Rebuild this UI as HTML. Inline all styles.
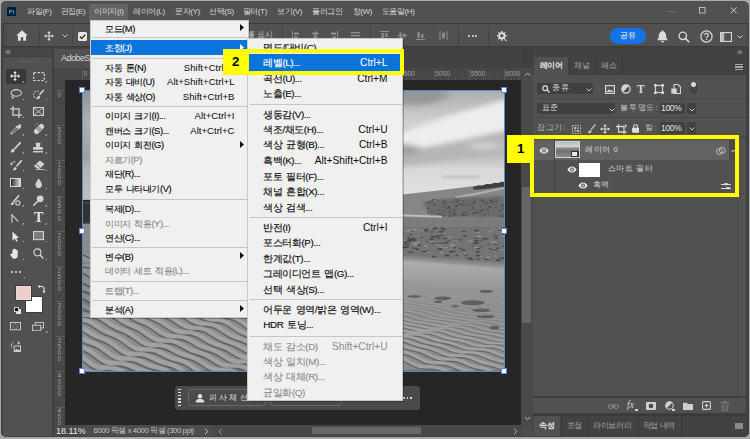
<!DOCTYPE html>
<html lang="ko"><head><meta charset="utf-8"><title>Photoshop</title><style>
html,body{margin:0;padding:0}
body{width:750px;height:439px;overflow:hidden;background:#a9a9a9;font-family:"Liberation Sans",sans-serif;position:relative;-webkit-font-smoothing:antialiased}
div,span,svg{position:absolute;box-sizing:border-box}
#win{left:1px;top:1px;width:748px;height:436px;background:#4a4a4a;border-radius:5px 6px 5px 5px;overflow:hidden}
.t{white-space:nowrap;line-height:12px;height:12px;font-size:9.500px}
.mb{color:#d6d6d6;font-size:8.100px}
.mi{color:#0c0c0c;-webkit-text-stroke:0.150px;font-size:9.400px;letter-spacing:-0.450px;word-spacing:1.500px}
.mi.d{color:#8a8a8a}
.sc{color:#0c0c0c;font-size:9.6px;text-align:right}
.sc.d{color:#8a8a8a}
.si{color:#0c0c0c;-webkit-text-stroke:0.150px;font-size:9.900px;letter-spacing:-0.450px;word-spacing:1.500px}
.si.d{color:#8d8d8d}
.ss{color:#0c0c0c;font-size:10.200px;text-align:right}
.ss.d{color:#8d8d8d}
.sep{height:1px;background:#c4c4c4}
.pt{color:#c8c8c8;font-size:7.700px;letter-spacing:0.700px}
.tb{font-size:7.700px;letter-spacing:-0.400px}
.rl{color:#a0a0a0;font-size:6.6px;line-height:8px;height:8px}
.rv{color:#a0a0a0;font-size:6.4px;line-height:6.1px;width:8px;text-align:center}
</style></head><body>
<div id="win">
<div style="left:0.0px;top:0.0px;width:748.0px;height:21.6px;background:#515151;"></div>
<div style="left:88.3px;top:3.0px;width:39.0px;height:15.5px;background:#646464;"></div>
<svg style="left:6px;top:5.900px" width="9.200" height="9.200" viewBox="0 0 24 24"><rect width="24" height="24" rx="4" fill="#001e36"/><path d="M5.5 17V7h3.7c2.2 0 3.6 1 3.6 3s-1.5 3.200-3.800 3.200H7.600V17zM7.600 8.800v2.600h1.300c1.100 0 1.700-.5 1.700-1.300s-.6-1.300-1.700-1.300zM16.500 17.200c-1 0-1.900-.2-2.600-.6v-1.900c.8.500 1.700.8 2.500.8.700 0 1-.2 1-.6 0-.4-.3-.6-1.300-1-1.500-.6-2.200-1.300-2.200-2.500 0-1.400 1.100-2.300 2.900-2.300.9 0 1.700.2 2.300.5v1.800c-.7-.4-1.500-.6-2.200-.6-.6 0-.9.200-.9.500 0 .4.300.6 1.300 1 1.600.6 2.200 1.300 2.200 2.500 0 1.500-1.100 2.400-3 2.400z" fill="#31a8ff"/></svg>
<span class="t mb" style="left:26.3px;top:5.3px;letter-spacing:-0.42px">파일(F)</span>
<span class="t mb" style="left:59.7px;top:5.3px;letter-spacing:-0.42px">편집(E)</span>
<span class="t mb" style="left:93.3px;top:5.3px;letter-spacing:-0.42px">이미지(I)</span>
<span class="t mb" style="left:132.3px;top:5.3px;letter-spacing:-0.42px">레이어(L)</span>
<span class="t mb" style="left:174.0px;top:5.3px;letter-spacing:-0.42px">문자(Y)</span>
<span class="t mb" style="left:208.0px;top:5.3px;letter-spacing:-0.42px">선택(S)</span>
<span class="t mb" style="left:241.7px;top:5.3px;letter-spacing:-0.42px">필터(T)</span>
<span class="t mb" style="left:276.3px;top:5.3px;letter-spacing:-0.42px">보기(V)</span>
<span class="t mb" style="left:311.3px;top:5.3px;letter-spacing:-0.42px">플러그인</span>
<span class="t mb" style="left:351.7px;top:5.3px;letter-spacing:-0.42px">창(W)</span>
<span class="t mb" style="left:380.7px;top:5.3px;letter-spacing:-0.42px">도움말(H)</span>
<svg style="left:660px;top:2px" width="88" height="16" viewBox="0 0 88 16"><path d="M6 8.500h8" stroke="#6a6a6a" stroke-width="1" fill="none"/><rect x="38.500" y="4.500" width="5.500" height="5.500" stroke="#c4c4c4" stroke-width="0.900" fill="none"/><path d="M69.700 4.300l6 6M75.700 4.300l-6 6" stroke="#d0d0d0" stroke-width="1" fill="none"/></svg>
<div style="left:1.6px;top:21.6px;width:744.4px;height:1.1px;background:#3a3a3a;"></div>
<div style="left:2.6px;top:22.7px;width:742.9px;height:22.5px;background:#515151;"></div>
<div style="left:1.6px;top:22.7px;width:1.0px;height:23.7px;background:#3a3a3a;"></div>
<div style="left:1.6px;top:45.2px;width:744.4px;height:1.2px;background:#3a3a3a;"></div>
<div style="left:5.0px;top:26.0px;width:1.0px;height:18.0px;background:#444;"></div>
<svg style="left:15px;top:29px" width="12" height="11" viewBox="0 0 12 11"><path d="M6 0.300L0.300 5.400h1.600v5.300h2.900V7.300h2.400v3.400h2.900V5.400h1.600z" fill="#e4e4e4"/></svg>
<div style="left:38.0px;top:26.0px;width:1.0px;height:18.0px;background:#434343;"></div>
<svg style="left:43.200px;top:30px" width="10" height="10" viewBox="0 0 12 12"><path d="M6 0l2.200 2.600H6.600v2.800h2.800V3.800L12 6l-2.600 2.200V6.600H6.600v2.800h1.600L6 12 3.800 9.400h1.600V6.600H2.600v1.600L0 6l2.600-2.200v1.600h2.800V2.600H3.800z" fill="#dcdcdc"/></svg>
<svg style="left:61px;top:33px" width="6" height="4" viewBox="0 0 6 4"><path d="M0.500 0.500L3 3l2.500-2.500" stroke="#c8c8c8" stroke-width="1" fill="none"/></svg>
<div style="left:71.0px;top:26.0px;width:1.0px;height:18.0px;background:#434343;"></div>
<svg style="left:76.500px;top:30.500px" width="9" height="9" viewBox="0 0 9 9"><rect width="9" height="9" rx="1.500" fill="#e6e6e6"/><path d="M2 4.600l1.800 1.800L7.200 2.600" stroke="#2a2a2a" stroke-width="1.400" fill="none"/></svg>
<span class="t pt" style="left:246.0px;top:27.5px;color:#bdbdbd;letter-spacing:0px">롤 표시</span>
<div style="left:281.0px;top:26.0px;width:1.0px;height:18.0px;background:#434343;"></div>
<svg style="left:290.5px;top:30px" width="9" height="9" viewBox="0 0 9 9"><path d="M0.500 0v9" stroke="#8e8e8e"/><rect x="2" y="1.500" width="5" height="2.200" fill="#8e8e8e"/><rect x="2" y="5.300" width="3.500" height="2.200" fill="#8e8e8e"/></svg>
<svg style="left:309.5px;top:30px" width="9" height="9" viewBox="0 0 9 9"><path d="M4.500 0v9" stroke="#8e8e8e"/><rect x="1.500" y="1.500" width="6" height="2.200" fill="#8e8e8e"/><rect x="2.500" y="5.300" width="4" height="2.200" fill="#8e8e8e"/></svg>
<svg style="left:327.5px;top:30px" width="9" height="9" viewBox="0 0 9 9"><path d="M8.500 0v9" stroke="#8e8e8e"/><rect x="2" y="1.500" width="5" height="2.200" fill="#8e8e8e"/><rect x="3.500" y="5.300" width="3.500" height="2.200" fill="#8e8e8e"/></svg>
<svg style="left:349.5px;top:30px" width="9" height="9" viewBox="0 0 9 9"><rect x="0" y="1" width="9" height="1.400" fill="#8e8e8e"/><rect x="0" y="4" width="9" height="1.400" fill="#8e8e8e"/><rect x="2" y="7" width="5" height="1.400" fill="#8e8e8e"/></svg>
<div style="left:369.0px;top:26.0px;width:1.0px;height:18.0px;background:#434343;"></div>
<svg style="left:378.5px;top:30px" width="9" height="9" viewBox="0 0 9 9"><path d="M0 0.500h9" stroke="#8e8e8e"/><rect x="1.500" y="2" width="2.200" height="6" fill="#8e8e8e"/><rect x="5.300" y="2" width="2.200" height="4" fill="#8e8e8e"/></svg>
<svg style="left:397.0px;top:30px" width="9" height="9" viewBox="0 0 9 9"><path d="M0 4.500h9" stroke="#8e8e8e"/><rect x="1.500" y="1.500" width="2.200" height="6" fill="#8e8e8e"/><rect x="5.300" y="2.500" width="2.200" height="4" fill="#8e8e8e"/></svg>
<svg style="left:414.5px;top:30px" width="9" height="9" viewBox="0 0 9 9"><path d="M0 8.500h9" stroke="#8e8e8e"/><rect x="1.500" y="1" width="2.200" height="6" fill="#8e8e8e"/><rect x="5.300" y="3" width="2.200" height="4" fill="#8e8e8e"/></svg>
<svg style="left:438.0px;top:30px" width="9" height="9" viewBox="0 0 9 9"><path d="M1 0v9M8 0v9" stroke="#8e8e8e"/><rect x="3.200" y="1.500" width="2.600" height="6" fill="#8e8e8e"/></svg>
<div style="left:457.0px;top:26.0px;width:1.0px;height:18.0px;background:#434343;"></div>
<div style="left:467.0px;top:33.5px;width:2.0px;height:2.0px;background:#e0e0e0;border-radius:1px"></div>
<div style="left:470.5px;top:33.5px;width:2.0px;height:2.0px;background:#e0e0e0;border-radius:1px"></div>
<div style="left:474.0px;top:33.5px;width:2.0px;height:2.0px;background:#e0e0e0;border-radius:1px"></div>
<div style="left:486.5px;top:26.0px;width:1.0px;height:18.0px;background:#434343;"></div>
<svg style="left:496px;top:29.800px" width="10.500" height="10.500" viewBox="0 0 12 12"><circle cx="5.500" cy="5.500" r="3" fill="none" stroke="#e0e0e0" stroke-width="2"/><g stroke="#e0e0e0" stroke-width="1.600"><path d="M5.500 0v2M5.500 9v2M0 5.500h2M9 5.500h2M1.600 1.600l1.400 1.400M8 8l1.400 1.400M1.600 9.400L3 8M8 3l1.400-1.400"/></g><path d="M8.500 10h3l-1.500 1.800z" fill="#e0e0e0"/></svg>
<div style="left:609.0px;top:27.0px;width:36.0px;height:16.0px;background:#1473e6;border-radius:8px"></div>
<span class="t t" style="left:609.0px;width:36.0px;top:29.0px;color:#fff;font-size:8px;text-align:center;letter-spacing:-0.3px">공유</span>
<svg style="left:655.500px;top:28.500px" width="11" height="13" viewBox="0 0 11 13"><path d="M5.500 0.500c0.600 0 1 .4 1 1 1.700.5 2.600 2 2.600 3.800 0 2.700.6 3.500 1.600 4.200v.7H0.300v-.7c1-.7 1.600-1.500 1.600-4.200 0-1.800.9-3.300 2.600-3.800 0-.6.400-1 1-1zM4 11h3c0 .9-.7 1.500-1.500 1.500S4 11.900 4 11z" fill="#dcdcdc"/></svg>
<svg style="left:677px;top:29.500px" width="12" height="12" viewBox="0 0 12 12"><circle cx="4.800" cy="4.800" r="3.700" fill="none" stroke="#dcdcdc" stroke-width="1.300"/><path d="M7.600 7.600l3.600 3.600" stroke="#dcdcdc" stroke-width="1.500"/></svg>
<svg style="left:698.500px;top:29px" width="13" height="13" viewBox="0 0 13 13"><circle cx="6.500" cy="6.500" r="5.600" fill="none" stroke="#dcdcdc" stroke-width="1.200"/><path d="M4.700 5.200c0-1.100.8-1.800 1.900-1.800s1.800.7 1.800 1.600c0 1.500-1.800 1.500-1.800 2.900" fill="none" stroke="#dcdcdc" stroke-width="1.100"/><rect x="6" y="8.800" width="1.200" height="1.200" fill="#dcdcdc"/></svg>
<svg style="left:718.500px;top:30.500px" width="12" height="10" viewBox="0 0 12 10"><rect x="0.600" y="0.600" width="10.800" height="8.800" fill="none" stroke="#d8d8d8" stroke-width="1.100"/><rect x="1" y="1" width="3.200" height="8" fill="#bdbdbd"/></svg>
<svg style="left:736px;top:33.500px" width="6" height="4" viewBox="0 0 6 4"><path d="M0.500 0.500L3 3l2.500-2.500" stroke="#c8c8c8" stroke-width="1" fill="none"/></svg>
<div style="left:0.0px;top:46.4px;width:748.0px;height:389.6px;background:#404040;"></div>
<div style="left:2.0px;top:47.3px;width:49.0px;height:8.2px;background:#464646;"></div>
<span class="t t" style="left:4.5px;top:44.8px;color:#c0c0c0;font-size:9.500px">&#171;</span>
<div style="left:2.0px;top:55.5px;width:49.0px;height:379.5px;background:#515151;"></div>
<div style="left:19.0px;top:59.5px;width:1.5px;height:1.0px;background:#686868;"></div>
<div style="left:22.0px;top:59.5px;width:1.5px;height:1.0px;background:#686868;"></div>
<div style="left:25.0px;top:59.5px;width:1.5px;height:1.0px;background:#686868;"></div>
<div style="left:28.0px;top:59.5px;width:1.5px;height:1.0px;background:#686868;"></div>
<div style="left:31.0px;top:59.5px;width:1.5px;height:1.0px;background:#686868;"></div>
<div style="left:53.0px;top:47.3px;width:467.0px;height:19.7px;background:#424242;"></div>
<div style="left:53.0px;top:48.0px;width:96.0px;height:19.0px;background:#515151;"></div>
<span class="t t" style="left:60.0px;top:50.7px;color:#d8d8d8;font-size:9px;letter-spacing:-0.500px">AdobeS</span>
<div style="left:53.0px;top:67.3px;width:478.5px;height:11.7px;background:#474747;"></div>
<div style="left:53.0px;top:67.3px;width:11.0px;height:356.7px;background:#474747;"></div>
<div style="left:64.0px;top:79.0px;width:456.0px;height:345.0px;background:#262626;"></div>
<div style="left:520.0px;top:67.3px;width:11.5px;height:356.7px;background:#494949;"></div>
<div style="left:520.8px;top:186.0px;width:9.7px;height:136.0px;background:#646464;border-radius:1px"></div>
<svg style="left:523px;top:70.800px" width="7" height="5" viewBox="0 0 7 5"><path d="M0.800 3.800L3.500 1l2.700 2.800" stroke="#bbb" stroke-width="1" fill="none"/></svg>
<svg style="left:523px;top:414.800px" width="7" height="5" viewBox="0 0 7 5"><path d="M0.800 1L3.500 3.800 6.200 1" stroke="#bbb" stroke-width="1" fill="none"/></svg>
<div style="left:81.0px;top:68.0px;width:0.8px;height:11.0px;background:#5e5e5e;"></div>
<span class="t rl" style="left:82.6px;top:69.3px;">0</span>
<div style="left:88.0px;top:77.0px;width:0.7px;height:2.0px;background:#5a5a5a;"></div>
<div style="left:95.1px;top:77.0px;width:0.7px;height:2.0px;background:#5a5a5a;"></div>
<div style="left:102.1px;top:77.0px;width:0.7px;height:2.0px;background:#5a5a5a;"></div>
<div style="left:109.1px;top:77.0px;width:0.7px;height:2.0px;background:#5a5a5a;"></div>
<div style="left:116.2px;top:68.0px;width:0.8px;height:11.0px;background:#5e5e5e;"></div>
<span class="t rl" style="left:117.8px;top:69.3px;">500</span>
<div style="left:123.2px;top:77.0px;width:0.7px;height:2.0px;background:#5a5a5a;"></div>
<div style="left:130.2px;top:77.0px;width:0.7px;height:2.0px;background:#5a5a5a;"></div>
<div style="left:137.3px;top:77.0px;width:0.7px;height:2.0px;background:#5a5a5a;"></div>
<div style="left:144.3px;top:77.0px;width:0.7px;height:2.0px;background:#5a5a5a;"></div>
<div style="left:151.3px;top:68.0px;width:0.8px;height:11.0px;background:#5e5e5e;"></div>
<span class="t rl" style="left:152.9px;top:69.3px;">1000</span>
<div style="left:158.4px;top:77.0px;width:0.7px;height:2.0px;background:#5a5a5a;"></div>
<div style="left:165.4px;top:77.0px;width:0.7px;height:2.0px;background:#5a5a5a;"></div>
<div style="left:172.4px;top:77.0px;width:0.7px;height:2.0px;background:#5a5a5a;"></div>
<div style="left:179.5px;top:77.0px;width:0.7px;height:2.0px;background:#5a5a5a;"></div>
<div style="left:186.5px;top:68.0px;width:0.8px;height:11.0px;background:#5e5e5e;"></div>
<span class="t rl" style="left:188.1px;top:69.3px;">1500</span>
<div style="left:193.5px;top:77.0px;width:0.7px;height:2.0px;background:#5a5a5a;"></div>
<div style="left:200.6px;top:77.0px;width:0.7px;height:2.0px;background:#5a5a5a;"></div>
<div style="left:207.6px;top:77.0px;width:0.7px;height:2.0px;background:#5a5a5a;"></div>
<div style="left:214.6px;top:77.0px;width:0.7px;height:2.0px;background:#5a5a5a;"></div>
<div style="left:221.7px;top:68.0px;width:0.8px;height:11.0px;background:#5e5e5e;"></div>
<span class="t rl" style="left:223.3px;top:69.3px;">2000</span>
<div style="left:228.7px;top:77.0px;width:0.7px;height:2.0px;background:#5a5a5a;"></div>
<div style="left:235.7px;top:77.0px;width:0.7px;height:2.0px;background:#5a5a5a;"></div>
<div style="left:242.8px;top:77.0px;width:0.7px;height:2.0px;background:#5a5a5a;"></div>
<div style="left:249.8px;top:77.0px;width:0.7px;height:2.0px;background:#5a5a5a;"></div>
<div style="left:256.9px;top:68.0px;width:0.8px;height:11.0px;background:#5e5e5e;"></div>
<span class="t rl" style="left:258.5px;top:69.3px;">2500</span>
<div style="left:263.9px;top:77.0px;width:0.7px;height:2.0px;background:#5a5a5a;"></div>
<div style="left:270.9px;top:77.0px;width:0.7px;height:2.0px;background:#5a5a5a;"></div>
<div style="left:277.9px;top:77.0px;width:0.7px;height:2.0px;background:#5a5a5a;"></div>
<div style="left:285.0px;top:77.0px;width:0.7px;height:2.0px;background:#5a5a5a;"></div>
<div style="left:292.0px;top:68.0px;width:0.8px;height:11.0px;background:#5e5e5e;"></div>
<span class="t rl" style="left:293.6px;top:69.3px;">3000</span>
<div style="left:299.0px;top:77.0px;width:0.7px;height:2.0px;background:#5a5a5a;"></div>
<div style="left:306.1px;top:77.0px;width:0.7px;height:2.0px;background:#5a5a5a;"></div>
<div style="left:313.1px;top:77.0px;width:0.7px;height:2.0px;background:#5a5a5a;"></div>
<div style="left:320.1px;top:77.0px;width:0.7px;height:2.0px;background:#5a5a5a;"></div>
<div style="left:327.2px;top:68.0px;width:0.8px;height:11.0px;background:#5e5e5e;"></div>
<span class="t rl" style="left:328.8px;top:69.3px;">3500</span>
<div style="left:334.2px;top:77.0px;width:0.7px;height:2.0px;background:#5a5a5a;"></div>
<div style="left:341.2px;top:77.0px;width:0.7px;height:2.0px;background:#5a5a5a;"></div>
<div style="left:348.3px;top:77.0px;width:0.7px;height:2.0px;background:#5a5a5a;"></div>
<div style="left:355.3px;top:77.0px;width:0.7px;height:2.0px;background:#5a5a5a;"></div>
<div style="left:362.4px;top:68.0px;width:0.8px;height:11.0px;background:#5e5e5e;"></div>
<span class="t rl" style="left:364.0px;top:69.3px;">4000</span>
<div style="left:369.4px;top:77.0px;width:0.7px;height:2.0px;background:#5a5a5a;"></div>
<div style="left:376.4px;top:77.0px;width:0.7px;height:2.0px;background:#5a5a5a;"></div>
<div style="left:383.4px;top:77.0px;width:0.7px;height:2.0px;background:#5a5a5a;"></div>
<div style="left:390.5px;top:77.0px;width:0.7px;height:2.0px;background:#5a5a5a;"></div>
<div style="left:397.5px;top:68.0px;width:0.8px;height:11.0px;background:#5e5e5e;"></div>
<span class="t rl" style="left:399.1px;top:69.3px;">4500</span>
<div style="left:404.6px;top:77.0px;width:0.7px;height:2.0px;background:#5a5a5a;"></div>
<div style="left:411.6px;top:77.0px;width:0.7px;height:2.0px;background:#5a5a5a;"></div>
<div style="left:418.6px;top:77.0px;width:0.7px;height:2.0px;background:#5a5a5a;"></div>
<div style="left:425.7px;top:77.0px;width:0.7px;height:2.0px;background:#5a5a5a;"></div>
<div style="left:432.7px;top:68.0px;width:0.8px;height:11.0px;background:#5e5e5e;"></div>
<span class="t rl" style="left:434.3px;top:69.3px;">5000</span>
<div style="left:439.7px;top:77.0px;width:0.7px;height:2.0px;background:#5a5a5a;"></div>
<div style="left:446.8px;top:77.0px;width:0.7px;height:2.0px;background:#5a5a5a;"></div>
<div style="left:453.8px;top:77.0px;width:0.7px;height:2.0px;background:#5a5a5a;"></div>
<div style="left:460.8px;top:77.0px;width:0.7px;height:2.0px;background:#5a5a5a;"></div>
<div style="left:467.9px;top:68.0px;width:0.8px;height:11.0px;background:#5e5e5e;"></div>
<span class="t rl" style="left:469.5px;top:69.3px;">5500</span>
<div style="left:474.9px;top:77.0px;width:0.7px;height:2.0px;background:#5a5a5a;"></div>
<div style="left:481.9px;top:77.0px;width:0.7px;height:2.0px;background:#5a5a5a;"></div>
<div style="left:489.0px;top:77.0px;width:0.7px;height:2.0px;background:#5a5a5a;"></div>
<div style="left:496.0px;top:77.0px;width:0.7px;height:2.0px;background:#5a5a5a;"></div>
<div style="left:503.0px;top:68.0px;width:0.8px;height:11.0px;background:#5e5e5e;"></div>
<span class="t rl" style="left:504.6px;top:69.3px;">6000</span>
<div style="left:510.1px;top:77.0px;width:0.7px;height:2.0px;background:#5a5a5a;"></div>
<div style="left:517.1px;top:77.0px;width:0.7px;height:2.0px;background:#5a5a5a;"></div>
<div style="left:524.1px;top:77.0px;width:0.7px;height:2.0px;background:#5a5a5a;"></div>
<div style="left:531.2px;top:77.0px;width:0.7px;height:2.0px;background:#5a5a5a;"></div>
<div style="left:53.5px;top:89.0px;width:10.5px;height:0.8px;background:#5e5e5e;"></div>
<span class="rv" style="left:54.300px;top:90.8px">0</span>
<div style="left:62.0px;top:96.0px;width:2.0px;height:0.7px;background:#5a5a5a;"></div>
<div style="left:62.0px;top:103.1px;width:2.0px;height:0.7px;background:#5a5a5a;"></div>
<div style="left:62.0px;top:110.1px;width:2.0px;height:0.7px;background:#5a5a5a;"></div>
<div style="left:62.0px;top:117.1px;width:2.0px;height:0.7px;background:#5a5a5a;"></div>
<div style="left:53.5px;top:124.2px;width:10.5px;height:0.8px;background:#5e5e5e;"></div>
<span class="rv" style="left:54.300px;top:126.0px">5<br>0<br>0</span>
<div style="left:62.0px;top:131.2px;width:2.0px;height:0.7px;background:#5a5a5a;"></div>
<div style="left:62.0px;top:138.2px;width:2.0px;height:0.7px;background:#5a5a5a;"></div>
<div style="left:62.0px;top:145.3px;width:2.0px;height:0.7px;background:#5a5a5a;"></div>
<div style="left:62.0px;top:152.3px;width:2.0px;height:0.7px;background:#5a5a5a;"></div>
<div style="left:53.5px;top:159.3px;width:10.5px;height:0.8px;background:#5e5e5e;"></div>
<span class="rv" style="left:54.300px;top:161.1px">1<br>0<br>0<br>0</span>
<div style="left:62.0px;top:166.4px;width:2.0px;height:0.7px;background:#5a5a5a;"></div>
<div style="left:62.0px;top:173.4px;width:2.0px;height:0.7px;background:#5a5a5a;"></div>
<div style="left:62.0px;top:180.4px;width:2.0px;height:0.7px;background:#5a5a5a;"></div>
<div style="left:62.0px;top:187.5px;width:2.0px;height:0.7px;background:#5a5a5a;"></div>
<div style="left:53.5px;top:194.5px;width:10.5px;height:0.8px;background:#5e5e5e;"></div>
<span class="rv" style="left:54.300px;top:196.3px">1<br>5<br>0<br>0</span>
<div style="left:62.0px;top:201.5px;width:2.0px;height:0.7px;background:#5a5a5a;"></div>
<div style="left:62.0px;top:208.6px;width:2.0px;height:0.7px;background:#5a5a5a;"></div>
<div style="left:62.0px;top:215.6px;width:2.0px;height:0.7px;background:#5a5a5a;"></div>
<div style="left:62.0px;top:222.6px;width:2.0px;height:0.7px;background:#5a5a5a;"></div>
<div style="left:53.5px;top:229.7px;width:10.5px;height:0.8px;background:#5e5e5e;"></div>
<span class="rv" style="left:54.300px;top:231.5px">2<br>0<br>0<br>0</span>
<div style="left:62.0px;top:236.7px;width:2.0px;height:0.7px;background:#5a5a5a;"></div>
<div style="left:62.0px;top:243.7px;width:2.0px;height:0.7px;background:#5a5a5a;"></div>
<div style="left:62.0px;top:250.8px;width:2.0px;height:0.7px;background:#5a5a5a;"></div>
<div style="left:62.0px;top:257.8px;width:2.0px;height:0.7px;background:#5a5a5a;"></div>
<div style="left:53.5px;top:264.9px;width:10.5px;height:0.8px;background:#5e5e5e;"></div>
<span class="rv" style="left:54.300px;top:266.7px">2<br>5<br>0<br>0</span>
<div style="left:62.0px;top:271.9px;width:2.0px;height:0.7px;background:#5a5a5a;"></div>
<div style="left:62.0px;top:278.9px;width:2.0px;height:0.7px;background:#5a5a5a;"></div>
<div style="left:62.0px;top:285.9px;width:2.0px;height:0.7px;background:#5a5a5a;"></div>
<div style="left:62.0px;top:293.0px;width:2.0px;height:0.7px;background:#5a5a5a;"></div>
<div style="left:53.5px;top:300.0px;width:10.5px;height:0.8px;background:#5e5e5e;"></div>
<span class="rv" style="left:54.300px;top:301.8px">3<br>0<br>0<br>0</span>
<div style="left:62.0px;top:307.0px;width:2.0px;height:0.7px;background:#5a5a5a;"></div>
<div style="left:62.0px;top:314.1px;width:2.0px;height:0.7px;background:#5a5a5a;"></div>
<div style="left:62.0px;top:321.1px;width:2.0px;height:0.7px;background:#5a5a5a;"></div>
<div style="left:62.0px;top:328.1px;width:2.0px;height:0.7px;background:#5a5a5a;"></div>
<div style="left:53.5px;top:335.2px;width:10.5px;height:0.8px;background:#5e5e5e;"></div>
<span class="rv" style="left:54.300px;top:337.0px">3<br>5<br>0<br>0</span>
<div style="left:62.0px;top:342.2px;width:2.0px;height:0.7px;background:#5a5a5a;"></div>
<div style="left:62.0px;top:349.2px;width:2.0px;height:0.7px;background:#5a5a5a;"></div>
<div style="left:62.0px;top:356.3px;width:2.0px;height:0.7px;background:#5a5a5a;"></div>
<div style="left:62.0px;top:363.3px;width:2.0px;height:0.7px;background:#5a5a5a;"></div>
<div style="left:53.5px;top:370.4px;width:10.5px;height:0.8px;background:#5e5e5e;"></div>
<span class="rv" style="left:54.300px;top:372.2px">4<br>0<br>0<br>0</span>
<div style="left:62.0px;top:377.4px;width:2.0px;height:0.7px;background:#5a5a5a;"></div>
<div style="left:62.0px;top:384.4px;width:2.0px;height:0.7px;background:#5a5a5a;"></div>
<div style="left:62.0px;top:391.4px;width:2.0px;height:0.7px;background:#5a5a5a;"></div>
<div style="left:62.0px;top:398.5px;width:2.0px;height:0.7px;background:#5a5a5a;"></div>
<div style="left:53.5px;top:405.5px;width:10.5px;height:0.8px;background:#5e5e5e;"></div>
<span class="rv" style="left:54.300px;top:407.3px">4<br>5<br>0<br>0</span>
<div style="left:62.0px;top:412.6px;width:2.0px;height:0.7px;background:#5a5a5a;"></div>
<div style="left:62.0px;top:419.6px;width:2.0px;height:0.7px;background:#5a5a5a;"></div>
<div style="left:53.0px;top:67.3px;width:11.0px;height:11.7px;background:#474747;"></div>
<svg style="left:81.0px;top:89.3px" width="422.3" height="280.7" viewBox="0 0 422 281" preserveAspectRatio="none"><defs>
<linearGradient id="sky" x1="0" y1="0" x2="0" y2="1"><stop offset="0" stop-color="#adadad"/><stop offset="0.14" stop-color="#bebebe"/><stop offset="0.3" stop-color="#d0d0d0"/><stop offset="0.48" stop-color="#c6c6c6"/><stop offset="0.6" stop-color="#bcbcbc"/><stop offset="0.72" stop-color="#d8d8d8"/><stop offset="1" stop-color="#e2e2e2"/></linearGradient>
<linearGradient id="sand" x1="0" y1="0" x2="0" y2="1"><stop offset="0" stop-color="#b6b6b6"/><stop offset="0.12" stop-color="#aaaaaa"/><stop offset="0.3" stop-color="#989898"/><stop offset="0.5" stop-color="#8e8e8e"/><stop offset="1" stop-color="#8a8a8a"/></linearGradient>
<linearGradient id="lft" x1="0" y1="0" x2="1" y2="0"><stop offset="0" stop-color="#000" stop-opacity="0.16"/><stop offset="1" stop-color="#000" stop-opacity="0"/></linearGradient>
<filter id="b3" x="-20%" y="-50%" width="140%" height="200%"><feGaussianBlur stdDeviation="4 2.500"/></filter>
<filter id="b1" x="-20%" y="-50%" width="140%" height="200%"><feGaussianBlur stdDeviation="0.900"/></filter>
<filter id="b05" x="-5%" y="-5%" width="110%" height="110%"><feGaussianBlur stdDeviation="0.600"/></filter>
</defs><rect x="0" y="0" width="422" height="110" fill="url(#sky)"/><g filter="url(#b3)"><ellipse cx="332" cy="4" rx="34" ry="11" fill="#979797"/><path d="M250 70 L320 42 L372 24 L430 8 L430 38 L380 50 L320 62 L250 86 Z" fill="#ededed"/><path d="M300 84 L320 62 L380 50 L430 40 L430 62 L380 68 L320 76 Z" fill="#b6b6b6"/><ellipse cx="324" cy="60" rx="14" ry="6" fill="#a2a2a2"/><ellipse cx="402" cy="56" rx="16" ry="3" fill="#d4d4d4"/></g><rect x="360" y="86" width="38" height="2.200" fill="#bcbcbc" filter="url(#b1)"/><rect x="0" y="0" width="200" height="112" fill="url(#lft)"/><path d="M0 112 L200 110 L320 104.500 L352 101 L372 98.500 L392 96 L422 93 L422 180 L0 180 Z" fill="#868686"/><path d="M372 106.500 L390 103.500 L422 97 L422 99.200 L390 105.800 L374 108 Z" fill="#b0b0b0" filter="url(#b05)"/><path d="M391 97 L396 95.500 L400 95.800 L404 94 L408 94.300 L412 92.800 L416 93 L419 91.800 L422 92 L422 96.500 L410 98.300 L400 99.300 L391 99.800 Z" fill="#404040" filter="url(#b05)"/><path d="M340 112 L370 108 L422 106 L422 128 L350 127 Z" fill="#6c6c6c" filter="url(#b1)"/><g fill="#505050" filter="url(#b05)"><ellipse cx="393.0" cy="122.4" rx="1.5" ry="0.9"/><ellipse cx="402.0" cy="125.6" rx="0.8" ry="0.7"/><ellipse cx="417.6" cy="120.7" rx="1.6" ry="0.5"/><ellipse cx="381.1" cy="113.4" rx="1.3" ry="0.7"/><ellipse cx="346.0" cy="112.9" rx="1.1" ry="0.9"/><ellipse cx="404.0" cy="111.9" rx="1.5" ry="0.6"/><ellipse cx="392.5" cy="111.3" rx="0.8" ry="0.8"/><ellipse cx="361.1" cy="112.9" rx="1.7" ry="0.8"/><ellipse cx="367.3" cy="126.3" rx="1.3" ry="0.8"/><ellipse cx="360.8" cy="125.9" rx="1.4" ry="0.9"/><ellipse cx="413.8" cy="114.4" rx="1.1" ry="0.6"/><ellipse cx="356.2" cy="110.2" rx="1.1" ry="0.7"/><ellipse cx="345.3" cy="121.2" rx="1.1" ry="0.6"/><ellipse cx="408.0" cy="117.7" rx="1.1" ry="0.7"/><ellipse cx="399.3" cy="110.0" rx="1.7" ry="0.5"/><ellipse cx="402.7" cy="124.2" rx="0.8" ry="0.8"/><ellipse cx="373.2" cy="119.4" rx="0.8" ry="0.5"/><ellipse cx="358.9" cy="126.2" rx="1.0" ry="0.8"/><ellipse cx="416.6" cy="126.0" rx="1.1" ry="0.6"/><ellipse cx="385.4" cy="123.0" rx="0.9" ry="0.8"/><ellipse cx="406.4" cy="124.5" rx="0.8" ry="0.9"/><ellipse cx="352.0" cy="115.1" rx="1.3" ry="0.9"/><ellipse cx="371.2" cy="125.6" rx="1.3" ry="0.6"/><ellipse cx="369.4" cy="112.2" rx="0.9" ry="0.6"/><ellipse cx="398.1" cy="126.9" rx="0.9" ry="0.5"/><ellipse cx="421.0" cy="118.6" rx="1.2" ry="0.6"/><ellipse cx="390.7" cy="123.9" rx="1.2" ry="0.7"/><ellipse cx="349.3" cy="125.5" rx="0.8" ry="0.7"/><ellipse cx="409.6" cy="111.4" rx="1.5" ry="0.9"/><ellipse cx="393.5" cy="123.2" rx="0.9" ry="0.7"/><ellipse cx="356.5" cy="124.2" rx="1.1" ry="0.7"/><ellipse cx="421.9" cy="124.3" rx="1.7" ry="0.7"/><ellipse cx="382.6" cy="122.1" rx="1.2" ry="0.6"/><ellipse cx="376.1" cy="111.6" rx="1.1" ry="0.9"/><ellipse cx="418.9" cy="120.3" rx="1.2" ry="0.6"/><ellipse cx="351.9" cy="113.9" rx="1.5" ry="0.8"/><ellipse cx="372.8" cy="123.1" rx="1.5" ry="0.8"/><ellipse cx="396.1" cy="122.7" rx="1.1" ry="0.8"/><ellipse cx="366.6" cy="117.7" rx="1.5" ry="0.8"/><ellipse cx="367.6" cy="126.0" rx="1.4" ry="0.7"/><ellipse cx="345.9" cy="118.8" rx="1.0" ry="0.8"/><ellipse cx="380.6" cy="123.7" rx="1.4" ry="0.8"/><ellipse cx="371.8" cy="120.6" rx="1.5" ry="0.8"/><ellipse cx="372.0" cy="124.2" rx="1.6" ry="0.8"/><ellipse cx="420.2" cy="126.2" rx="1.3" ry="0.7"/><ellipse cx="357.8" cy="124.1" rx="1.6" ry="0.7"/><ellipse cx="398.2" cy="122.0" rx="1.5" ry="0.6"/><ellipse cx="405.1" cy="119.5" rx="1.4" ry="0.7"/><ellipse cx="393.0" cy="122.9" rx="1.4" ry="0.8"/><ellipse cx="347.1" cy="111.9" rx="1.2" ry="0.8"/><ellipse cx="361.9" cy="121.3" rx="1.4" ry="0.5"/><ellipse cx="381.3" cy="113.1" rx="0.8" ry="0.6"/><ellipse cx="369.4" cy="112.3" rx="1.0" ry="0.5"/><ellipse cx="380.8" cy="115.8" rx="1.4" ry="0.7"/><ellipse cx="363.3" cy="125.3" rx="0.8" ry="0.7"/><ellipse cx="366.4" cy="116.4" rx="0.9" ry="0.8"/><ellipse cx="373.8" cy="109.6" rx="1.4" ry="0.5"/><ellipse cx="387.0" cy="115.1" rx="1.3" ry="0.9"/><ellipse cx="408.0" cy="116.5" rx="1.5" ry="0.8"/><ellipse cx="373.4" cy="111.6" rx="1.3" ry="0.7"/><ellipse cx="418.7" cy="126.4" rx="1.3" ry="0.6"/><ellipse cx="413.8" cy="109.0" rx="0.9" ry="0.7"/><ellipse cx="392.4" cy="111.5" rx="1.4" ry="0.9"/><ellipse cx="373.9" cy="116.8" rx="1.0" ry="0.6"/><ellipse cx="419.9" cy="115.8" rx="1.7" ry="0.9"/><ellipse cx="390.9" cy="113.7" rx="1.7" ry="0.7"/><ellipse cx="377.0" cy="114.7" rx="1.7" ry="0.7"/><ellipse cx="367.1" cy="117.6" rx="0.9" ry="0.7"/><ellipse cx="379.1" cy="114.3" rx="1.5" ry="0.8"/><ellipse cx="346.0" cy="118.6" rx="1.0" ry="0.9"/><ellipse cx="405.2" cy="113.4" rx="1.0" ry="0.6"/><ellipse cx="421.1" cy="114.3" rx="1.3" ry="0.7"/><ellipse cx="394.7" cy="119.9" rx="1.5" ry="0.5"/><ellipse cx="403.6" cy="114.4" rx="1.3" ry="0.6"/><ellipse cx="367.9" cy="118.5" rx="1.2" ry="0.6"/><ellipse cx="402.4" cy="119.6" rx="0.8" ry="0.6"/><ellipse cx="380.1" cy="125.5" rx="1.6" ry="0.7"/><ellipse cx="346.1" cy="123.0" rx="1.2" ry="0.7"/><ellipse cx="399.5" cy="120.4" rx="1.2" ry="0.9"/><ellipse cx="374.7" cy="116.1" rx="1.6" ry="0.6"/><ellipse cx="367.8" cy="123.9" rx="0.9" ry="0.8"/><ellipse cx="398.5" cy="116.8" rx="1.1" ry="0.8"/><ellipse cx="415.1" cy="111.6" rx="1.2" ry="0.7"/><ellipse cx="383.3" cy="115.0" rx="0.9" ry="0.7"/><ellipse cx="407.5" cy="110.2" rx="1.0" ry="0.8"/><ellipse cx="406.0" cy="120.9" rx="0.8" ry="0.8"/><ellipse cx="420.4" cy="127.0" rx="1.4" ry="0.5"/><ellipse cx="409.8" cy="112.9" rx="1.4" ry="0.9"/><ellipse cx="399.9" cy="111.4" rx="1.1" ry="0.9"/><ellipse cx="356.5" cy="120.0" rx="1.2" ry="0.6"/><ellipse cx="392.9" cy="109.8" rx="0.9" ry="0.7"/><ellipse cx="350.5" cy="110.0" rx="1.3" ry="0.8"/><ellipse cx="412.6" cy="111.4" rx="1.2" ry="0.6"/><ellipse cx="391.2" cy="117.8" rx="1.6" ry="0.6"/><ellipse cx="349.3" cy="121.6" rx="0.9" ry="0.8"/><ellipse cx="383.9" cy="125.4" rx="1.3" ry="0.7"/><ellipse cx="365.3" cy="118.9" rx="1.0" ry="0.8"/><ellipse cx="384.8" cy="111.4" rx="1.0" ry="0.6"/><ellipse cx="401.7" cy="112.2" rx="1.4" ry="0.8"/><ellipse cx="351.6" cy="121.0" rx="0.9" ry="0.5"/><ellipse cx="390.7" cy="113.3" rx="1.6" ry="0.7"/><ellipse cx="369.9" cy="123.3" rx="0.8" ry="0.8"/><ellipse cx="349.1" cy="111.7" rx="1.7" ry="0.8"/><ellipse cx="362.2" cy="111.1" rx="1.7" ry="0.8"/><ellipse cx="408.2" cy="111.5" rx="1.4" ry="0.6"/><ellipse cx="363.1" cy="115.0" rx="1.4" ry="0.6"/><ellipse cx="374.7" cy="111.5" rx="1.5" ry="0.8"/><ellipse cx="406.9" cy="116.8" rx="1.6" ry="0.7"/><ellipse cx="390.6" cy="119.3" rx="1.5" ry="0.7"/><ellipse cx="352.5" cy="109.6" rx="1.0" ry="0.5"/><ellipse cx="413.5" cy="117.7" rx="1.5" ry="0.5"/><ellipse cx="381.2" cy="125.0" rx="1.4" ry="0.7"/><ellipse cx="380.8" cy="110.8" rx="0.9" ry="0.6"/><ellipse cx="373.8" cy="115.9" rx="1.6" ry="0.6"/><ellipse cx="364.6" cy="114.0" rx="0.9" ry="0.6"/><ellipse cx="363.1" cy="117.7" rx="0.8" ry="0.9"/><ellipse cx="373.4" cy="125.9" rx="1.4" ry="0.8"/><ellipse cx="381.3" cy="126.0" rx="0.9" ry="0.8"/><ellipse cx="367.4" cy="121.1" rx="1.5" ry="0.6"/><ellipse cx="360.5" cy="109.4" rx="1.0" ry="0.5"/></g><path d="M318 124.500 L360 126 L360 127.800 L318 126.500 Z" fill="#bdbdbd" filter="url(#b05)"/><path d="M0 128 L422 128 L422 138 L0 138 Z" fill="#7c7c7c"/><path d="M0 137 L422 137 L422 176 L320 168 L0 160 Z" fill="#747474"/><g fill="#969696" filter="url(#b05)"><ellipse cx="364.9" cy="153.1" rx="1.4" ry="0.6"/><ellipse cx="419.2" cy="160.0" rx="2.1" ry="0.5"/><ellipse cx="359.6" cy="162.9" rx="2.0" ry="0.7"/><ellipse cx="413.6" cy="158.6" rx="2.3" ry="0.5"/><ellipse cx="320.5" cy="162.6" rx="1.9" ry="0.8"/><ellipse cx="405.5" cy="167.3" rx="1.9" ry="0.9"/><ellipse cx="398.2" cy="166.5" rx="1.5" ry="0.8"/><ellipse cx="423.4" cy="144.9" rx="2.0" ry="0.6"/><ellipse cx="367.8" cy="147.2" rx="2.4" ry="0.5"/><ellipse cx="335.9" cy="152.6" rx="1.3" ry="0.7"/><ellipse cx="413.1" cy="166.3" rx="1.6" ry="0.5"/><ellipse cx="405.8" cy="168.7" rx="2.3" ry="0.6"/><ellipse cx="417.4" cy="139.0" rx="1.5" ry="0.7"/><ellipse cx="346.3" cy="162.1" rx="1.9" ry="0.8"/><ellipse cx="334.1" cy="154.6" rx="3.0" ry="0.8"/><ellipse cx="327.5" cy="141.6" rx="2.4" ry="0.6"/><ellipse cx="357.1" cy="153.3" rx="2.2" ry="0.9"/><ellipse cx="343.5" cy="156.2" rx="1.7" ry="0.7"/><ellipse cx="395.5" cy="142.3" rx="2.1" ry="0.8"/><ellipse cx="318.9" cy="162.7" rx="2.0" ry="0.7"/><ellipse cx="382.7" cy="163.4" rx="1.3" ry="0.7"/><ellipse cx="322.1" cy="150.3" rx="1.8" ry="0.5"/><ellipse cx="349.6" cy="152.4" rx="2.4" ry="0.9"/><ellipse cx="357.3" cy="155.0" rx="2.5" ry="0.9"/><ellipse cx="418.7" cy="169.6" rx="1.7" ry="0.6"/><ellipse cx="416.8" cy="140.5" rx="2.0" ry="0.8"/><ellipse cx="374.0" cy="150.4" rx="2.9" ry="0.6"/><ellipse cx="376.5" cy="164.5" rx="1.4" ry="0.6"/><ellipse cx="370.4" cy="156.1" rx="1.6" ry="0.7"/><ellipse cx="324.3" cy="140.8" rx="1.8" ry="0.6"/><ellipse cx="420.6" cy="146.4" rx="1.7" ry="0.8"/><ellipse cx="396.6" cy="146.4" rx="2.7" ry="0.8"/><ellipse cx="359.2" cy="158.1" rx="1.6" ry="0.6"/><ellipse cx="410.9" cy="152.0" rx="2.8" ry="0.6"/><ellipse cx="332.6" cy="139.7" rx="2.5" ry="0.7"/><ellipse cx="319.0" cy="139.4" rx="2.7" ry="0.7"/><ellipse cx="410.4" cy="139.3" rx="2.3" ry="0.5"/><ellipse cx="394.4" cy="157.6" rx="2.3" ry="0.6"/><ellipse cx="418.6" cy="141.6" rx="1.3" ry="0.8"/><ellipse cx="327.8" cy="140.1" rx="2.0" ry="0.8"/><ellipse cx="412.6" cy="161.1" rx="1.3" ry="0.8"/><ellipse cx="407.4" cy="141.9" rx="2.6" ry="0.6"/><ellipse cx="349.7" cy="138.0" rx="2.6" ry="0.7"/><ellipse cx="413.6" cy="152.9" rx="1.5" ry="0.6"/><ellipse cx="339.8" cy="140.8" rx="1.8" ry="0.5"/><ellipse cx="363.1" cy="157.9" rx="2.4" ry="0.6"/><ellipse cx="332.7" cy="153.7" rx="2.4" ry="0.7"/><ellipse cx="378.8" cy="167.2" rx="1.5" ry="0.6"/><ellipse cx="370.3" cy="155.2" rx="2.8" ry="0.7"/><ellipse cx="388.2" cy="151.4" rx="2.6" ry="0.8"/><ellipse cx="349.1" cy="141.5" rx="1.7" ry="0.6"/><ellipse cx="412.3" cy="146.5" rx="2.3" ry="0.8"/><ellipse cx="419.4" cy="141.7" rx="2.6" ry="0.6"/><ellipse cx="328.9" cy="158.2" rx="2.7" ry="0.7"/><ellipse cx="358.7" cy="158.4" rx="2.5" ry="0.6"/></g><g fill="#484848" filter="url(#b05)"><ellipse cx="356.6" cy="148.6" rx="2.1" ry="0.6"/><ellipse cx="395.6" cy="162.4" rx="1.5" ry="0.6"/><ellipse cx="389.3" cy="170.0" rx="2.5" ry="0.7"/><ellipse cx="421.4" cy="138.2" rx="1.3" ry="0.9"/><ellipse cx="361.5" cy="139.5" rx="2.3" ry="1.0"/><ellipse cx="373.0" cy="149.9" rx="1.4" ry="0.5"/><ellipse cx="413.3" cy="154.7" rx="3.1" ry="0.5"/><ellipse cx="343.8" cy="139.7" rx="2.0" ry="0.5"/><ellipse cx="345.1" cy="151.9" rx="1.8" ry="0.5"/><ellipse cx="337.0" cy="155.3" rx="2.0" ry="0.8"/><ellipse cx="326.9" cy="148.7" rx="1.4" ry="0.8"/><ellipse cx="415.7" cy="158.3" rx="2.9" ry="0.6"/><ellipse cx="319.8" cy="156.3" rx="2.2" ry="0.8"/><ellipse cx="357.9" cy="159.3" rx="2.7" ry="1.0"/><ellipse cx="350.6" cy="153.3" rx="2.9" ry="0.6"/><ellipse cx="330.3" cy="148.6" rx="1.4" ry="0.9"/><ellipse cx="404.9" cy="148.6" rx="1.5" ry="0.5"/><ellipse cx="344.0" cy="140.9" rx="2.1" ry="0.8"/><ellipse cx="344.0" cy="140.1" rx="2.6" ry="0.5"/><ellipse cx="339.2" cy="147.7" rx="1.9" ry="0.5"/><ellipse cx="362.6" cy="148.7" rx="2.7" ry="0.8"/><ellipse cx="413.0" cy="160.2" rx="2.7" ry="0.8"/><ellipse cx="364.9" cy="165.8" rx="2.5" ry="1.0"/><ellipse cx="395.2" cy="161.8" rx="1.7" ry="0.9"/><ellipse cx="358.5" cy="142.4" rx="1.3" ry="0.6"/><ellipse cx="345.8" cy="161.0" rx="1.8" ry="0.5"/><ellipse cx="399.0" cy="156.9" rx="1.3" ry="0.5"/><ellipse cx="331.8" cy="150.1" rx="2.9" ry="1.0"/><ellipse cx="382.9" cy="145.9" rx="2.1" ry="0.7"/><ellipse cx="353.0" cy="138.4" rx="2.4" ry="0.9"/><ellipse cx="395.0" cy="141.2" rx="2.3" ry="0.6"/><ellipse cx="393.2" cy="153.2" rx="3.1" ry="0.9"/><ellipse cx="330.5" cy="148.8" rx="3.0" ry="0.7"/><ellipse cx="364.0" cy="153.0" rx="2.7" ry="1.0"/><ellipse cx="381.2" cy="141.5" rx="2.8" ry="0.7"/><ellipse cx="321.5" cy="157.6" rx="2.2" ry="0.9"/><ellipse cx="359.6" cy="145.3" rx="1.8" ry="0.6"/><ellipse cx="377.6" cy="150.1" rx="2.7" ry="0.6"/><ellipse cx="355.3" cy="146.4" rx="3.2" ry="0.9"/><ellipse cx="408.1" cy="159.0" rx="2.0" ry="0.6"/><ellipse cx="406.2" cy="154.7" rx="1.3" ry="0.6"/><ellipse cx="328.5" cy="162.4" rx="3.0" ry="0.6"/><ellipse cx="402.5" cy="149.0" rx="2.6" ry="0.9"/><ellipse cx="384.0" cy="165.2" rx="2.0" ry="0.5"/><ellipse cx="372.2" cy="157.9" rx="1.6" ry="0.7"/><ellipse cx="351.6" cy="138.9" rx="1.8" ry="0.7"/><ellipse cx="368.5" cy="161.9" rx="2.0" ry="1.0"/><ellipse cx="404.4" cy="169.4" rx="2.6" ry="0.8"/><ellipse cx="374.9" cy="165.2" rx="1.9" ry="0.8"/><ellipse cx="390.0" cy="155.8" rx="1.8" ry="0.5"/><ellipse cx="327.3" cy="150.1" rx="2.4" ry="0.9"/><ellipse cx="393.7" cy="148.4" rx="3.1" ry="0.6"/><ellipse cx="393.9" cy="140.4" rx="2.7" ry="0.8"/><ellipse cx="419.4" cy="168.5" rx="2.6" ry="0.9"/><ellipse cx="396.3" cy="158.8" rx="1.6" ry="0.8"/><ellipse cx="413.0" cy="146.1" rx="3.1" ry="0.8"/><ellipse cx="359.7" cy="138.1" rx="2.0" ry="0.6"/><ellipse cx="387.2" cy="168.6" rx="3.0" ry="0.8"/><ellipse cx="359.0" cy="141.7" rx="2.6" ry="0.8"/><ellipse cx="393.8" cy="150.7" rx="3.0" ry="0.6"/><ellipse cx="350.4" cy="147.1" rx="2.4" ry="0.9"/><ellipse cx="335.7" cy="159.5" rx="2.7" ry="0.6"/><ellipse cx="324.6" cy="157.2" rx="2.9" ry="0.9"/><ellipse cx="395.2" cy="152.2" rx="2.1" ry="0.8"/><ellipse cx="413.9" cy="148.3" rx="1.8" ry="0.8"/><ellipse cx="420.5" cy="144.4" rx="1.3" ry="0.6"/><ellipse cx="377.6" cy="158.5" rx="1.6" ry="0.6"/><ellipse cx="381.0" cy="160.0" rx="2.6" ry="0.9"/><ellipse cx="324.5" cy="154.5" rx="2.9" ry="1.0"/><ellipse cx="351.8" cy="166.9" rx="2.5" ry="1.0"/><ellipse cx="342.3" cy="161.7" rx="2.9" ry="0.7"/><ellipse cx="328.7" cy="144.6" rx="1.5" ry="0.5"/><ellipse cx="334.1" cy="158.9" rx="1.4" ry="0.9"/><ellipse cx="396.0" cy="165.8" rx="2.8" ry="0.9"/><ellipse cx="416.0" cy="170.5" rx="2.5" ry="1.0"/><ellipse cx="329.0" cy="141.5" rx="1.3" ry="0.6"/><ellipse cx="357.7" cy="153.6" rx="2.6" ry="0.9"/><ellipse cx="326.9" cy="151.7" rx="2.3" ry="0.7"/><ellipse cx="330.5" cy="158.3" rx="1.9" ry="0.8"/><ellipse cx="418.2" cy="140.5" rx="2.7" ry="0.9"/><ellipse cx="349.4" cy="142.0" rx="2.2" ry="0.7"/><ellipse cx="396.2" cy="169.2" rx="2.0" ry="0.6"/><ellipse cx="370.9" cy="161.7" rx="2.8" ry="0.8"/><ellipse cx="349.4" cy="149.5" rx="2.9" ry="0.8"/><ellipse cx="323.3" cy="152.3" rx="1.7" ry="0.8"/><ellipse cx="325.8" cy="147.2" rx="1.4" ry="0.7"/><ellipse cx="422.4" cy="156.4" rx="2.0" ry="1.0"/><ellipse cx="327.7" cy="150.1" rx="2.8" ry="0.5"/><ellipse cx="399.2" cy="150.3" rx="1.2" ry="0.6"/><ellipse cx="366.6" cy="151.0" rx="2.2" ry="0.5"/></g><path d="M0 162 L320 167.500 L422 175 L422 281 L0 281 Z" fill="url(#sand)"/><path d="M0 160 L320 166 L422 173.500 L422 178 L320 170 L0 165 Z" fill="#8a8a8a" filter="url(#b1)"/><clipPath id="cl"><rect x="0" y="222" width="172" height="60"/><rect x="0" y="163" width="10" height="60"/></clipPath><clipPath id="cr"><rect x="314" y="180" width="110" height="102"/></clipPath><g clip-path="url(#cl)"><g fill="none" stroke="#5c5c5c" stroke-linejoin="round" filter="url(#b05)"><path d="M-6 135.2 -1 139.2 4 143.3 9 146.6 14 148.7 19 149.9 24 151.2 29 153.1 34 155.5 39 157.8 44 159.2 49 160.1 54 161.0 59 162.9 64 166.1 69 169.8 74 173.1 79 175.2 84 176.4 89 177.3 94 178.7 99 180.7 104 182.8 109 184.2 114 184.8 119 185.3 124 186.6 129 189.3 134 193.0 139 196.7 144 199.6 149 201.4 154 202.8 159 204.6 164 207.1 169 209.8 174 211.9" stroke-width="1.6" stroke-opacity="0.85"/><path d="M-6 146.7 -1 150.0 4 152.1 9 153.4 14 154.8 19 156.7 24 159.2 29 161.3 34 162.7 39 163.4 44 164.2 49 166.0 54 169.1 59 172.8 64 176.0 69 178.2 74 179.4 79 180.4 84 181.9 89 184.0 94 186.1 99 187.5 104 188.0 109 188.5 114 189.7 119 192.4 124 196.1 129 199.8 134 202.8 139 204.7 144 206.2 149 208.2 154 210.7 159 213.5 164 215.6 169 216.8 174 217.4" stroke-width="1.6" stroke-opacity="0.85"/><path d="M-6 155.6 -1 157.0 4 158.4 9 160.4 14 162.8 19 164.9 24 166.2 29 166.7 34 167.4 39 169.1 44 172.1 49 175.8 54 179.1 59 181.2 64 182.5 69 183.6 74 185.2 79 187.4 84 189.5 89 190.9 94 191.4 99 191.8 104 193.0 109 195.6 114 199.3 119 203.1 124 206.1 129 208.1 134 209.7 139 211.8 144 214.5 149 217.3 154 219.5 159 220.6 164 221.1 169 222.1 174 224.4" stroke-width="1.6" stroke-opacity="0.85"/><path d="M-6 162.0 -1 164.1 4 166.5 9 168.6 14 169.8 19 170.2 24 170.7 29 172.3 34 175.3 39 178.9 44 182.1 49 184.3 54 185.6 59 186.8 64 188.5 69 190.8 74 193.0 79 194.4 84 194.9 89 195.2 94 196.4 99 199.0 104 202.7 109 206.5 114 209.5 119 211.6 124 213.3 129 215.5 134 218.3 139 221.2 144 223.4 149 224.5 154 225.0 159 225.9 164 228.0 169 231.3 174 235.1" stroke-width="1.6" stroke-opacity="0.85"/><path d="M-6 170.3 -1 172.3 4 173.4 9 173.7 14 174.1 19 175.6 24 178.5 29 182.0 34 185.3 39 187.5 44 188.8 49 190.1 54 192.0 59 194.4 64 196.7 69 198.1 74 198.6 79 198.8 84 200.0 89 202.6 94 206.2 99 210.0 104 213.0 109 215.1 114 217.0 119 219.3 124 222.2 129 225.2 134 227.4 139 228.5 144 228.9 149 229.7 154 231.7 159 234.9 164 238.6 169 241.7 174 243.8" stroke-width="1.6" stroke-opacity="0.85"/><path d="M-6 177.1 -1 177.3 4 177.6 9 179.0 14 181.8 19 185.3 24 188.5 29 190.7 34 192.1 39 193.5 44 195.5 49 198.1 54 200.4 59 201.9 64 202.4 69 202.6 74 203.7 79 206.2 84 209.9 89 213.6 94 216.7 99 218.8 104 220.8 109 223.2 114 226.2 119 229.3 124 231.5 129 232.5 134 232.9 139 233.6 144 235.5 149 238.6 154 242.1 159 245.1 164 247.2 169 248.9 174 250.8" stroke-width="1.6" stroke-opacity="0.85"/><path d="M-6 181.2 -1 182.5 4 185.2 9 188.6 14 191.8 19 194.1 24 195.5 29 197.0 34 199.1 39 201.8 44 204.3 49 205.8 54 206.3 59 206.5 64 207.6 69 210.1 74 213.7 79 217.4 84 220.4 89 222.6 94 224.6 99 227.1 104 230.3 109 233.4 114 235.7 119 236.7 124 236.9 129 237.5 134 239.3 139 242.4 144 245.8 149 248.7 154 250.7 159 252.3 164 254.3 169 257.0 174 259.9" stroke-width="1.7" stroke-opacity="0.85"/><path d="M-6 188.7 -1 192.1 4 195.3 9 197.5 14 199.0 19 200.6 24 202.9 29 205.7 34 208.3 39 209.9 44 210.4 49 210.5 54 211.6 59 214.0 64 217.6 69 221.3 74 224.3 79 226.5 84 228.5 89 231.1 94 234.4 99 237.7 104 240.0 109 240.9 114 241.1 119 241.6 124 243.3 129 246.2 134 249.5 139 252.3 144 254.2 149 255.8 154 257.8 159 260.6 164 263.6 169 266.0 174 267.0" stroke-width="1.7" stroke-opacity="0.85"/><path d="M-6 198.8 -1 201.0 4 202.6 9 204.3 14 206.7 19 209.7 24 212.4 29 214.1 34 214.6 39 214.8 44 215.7 49 218.2 54 221.7 59 225.3 64 228.3 69 230.5 74 232.5 79 235.2 84 238.6 89 241.9 94 244.3 99 245.2 104 245.3 109 245.7 114 247.3 119 250.1 124 253.3 129 255.9 134 257.8 139 259.3 144 261.4 149 264.2 154 267.4 159 269.8 164 270.9 169 270.9 174 270.7" stroke-width="1.7" stroke-opacity="0.85"/><path d="M-6 206.3 -1 208.1 4 210.7 9 213.8 14 216.7 19 218.4 24 218.9 29 219.1 34 220.1 39 222.4 44 225.9 49 229.5 54 232.4 59 234.5 64 236.6 69 239.4 74 242.9 79 246.3 84 248.6 89 249.6 94 249.6 99 249.9 104 251.4 109 254.1 114 257.2 119 259.7 124 261.4 129 262.9 134 265.0 139 267.9 144 271.2 149 273.7 154 274.9 159 274.9 164 274.7 169 275.6 174 277.7" stroke-width="1.7" stroke-opacity="0.85"/><path d="M-6 214.7 -1 218.0 4 221.0 9 222.9 14 223.4 19 223.6 24 224.5 29 226.9 34 230.3 39 233.8 44 236.6 49 238.7 54 240.8 59 243.6 64 247.2 69 250.6 74 253.1 79 254.0 84 254.0 89 254.2 94 255.6 99 258.2 104 261.1 109 263.5 114 265.2 119 266.6 124 268.7 129 271.7 134 275.1 139 277.7 144 279.0 149 279.0 154 278.9 159 279.7 164 281.8 169 284.6 174 287.2" stroke-width="1.8" stroke-opacity="0.85"/><path d="M-6 225.5 -1 227.4 4 228.1 9 228.2 14 229.1 19 231.4 24 234.7 29 238.2 34 240.9 39 242.9 44 245.0 49 247.9 54 251.5 59 255.1 64 257.5 69 258.4 74 258.4 79 258.6 84 259.9 89 262.3 94 265.1 99 267.4 104 269.0 109 270.4 114 272.5 119 275.6 124 279.0 129 281.8 134 283.1 139 283.2 144 283.2 149 284.0 154 286.1 159 288.8 164 291.4 169 293.3 174 294.9" stroke-width="1.8" stroke-opacity="0.85"/><path d="M-6 232.8 -1 233.0 4 233.9 9 236.1 14 239.4 19 242.7 24 245.3 29 247.3 34 249.3 39 252.2 44 255.9 49 259.5 54 262.0 59 263.0 64 262.9 69 263.0 74 264.3 79 266.6 84 269.3 89 271.4 94 272.8 99 274.2 104 276.3 109 279.5 114 283.1 119 286.0 124 287.4 129 287.6 134 287.6 139 288.4 144 290.5 149 293.3 154 295.7 159 297.6 164 299.1 169 301.4 174 304.8" stroke-width="1.8" stroke-opacity="0.85"/><path d="M-6 238.8 -1 240.9 4 244.1 9 247.3 14 249.8 19 251.7 24 253.7 29 256.6 34 260.3 39 264.0 44 266.6 49 267.5 54 267.4 59 267.5 64 268.7 69 270.9 74 273.5 79 275.5 84 276.8 89 278.1 94 280.3 99 283.5 104 287.2 109 290.2 114 291.8 119 292.0 124 292.1 129 293.0 134 295.1 139 297.8 144 300.3 149 302.0 154 303.5 159 305.8 164 309.3 169 313.6 174 317.6" stroke-width="1.8" stroke-opacity="0.85"/><path d="M-6 249.0 -1 252.0 4 254.4 9 256.1 14 258.1 19 261.0 24 264.8 29 268.6 34 271.2 39 272.1 44 272.0 49 272.1 54 273.2 59 275.4 64 277.8 69 279.7 74 280.9 79 282.1 84 284.3 89 287.6 94 291.5 99 294.6 104 296.3 109 296.6 114 296.8 119 297.8 124 299.9 129 302.6 134 304.9 139 306.6 144 308.1 149 310.3 154 313.8 159 318.2 164 322.4 169 325.2 174 326.5" stroke-width="1.8" stroke-opacity="0.85"/><path d="M-6 259.1 -1 260.7 4 262.6 9 265.5 14 269.3 19 273.1 24 275.8 29 276.8 34 276.7 39 276.8 44 277.9 49 280.0 54 282.3 59 284.0 64 285.1 69 286.3 74 288.5 79 291.9 84 295.8 89 299.1 94 300.9 99 301.4 104 301.6 109 302.7 114 304.8 119 307.5 124 309.8 129 311.4 134 312.8 139 315.0 144 318.5 149 323.0 154 327.2 159 330.1 164 331.5 169 332.1 174 333.1" stroke-width="1.9" stroke-opacity="0.85"/><path d="M-6 267.1 -1 270.0 4 273.9 9 277.7 14 280.4 19 281.5 24 281.4 29 281.5 34 282.6 39 284.6 44 286.9 49 288.5 54 289.5 59 290.6 64 292.7 69 296.2 74 300.3 79 303.7 84 305.6 89 306.2 94 306.6 99 307.7 104 309.9 109 312.6 114 314.8 119 316.3 124 317.6 129 319.7 134 323.3 139 327.8 144 332.1 149 335.1 154 336.5 159 337.2 164 338.2 169 340.2 174 342.6" stroke-width="1.9" stroke-opacity="0.85"/><path d="M-6 278.5 -1 282.4 4 285.1 9 286.2 14 286.2 19 286.3 24 287.4 29 289.4 34 291.6 39 293.1 44 293.9 49 295.0 54 297.1 59 300.7 64 304.9 69 308.4 74 310.4 79 311.2 84 311.7 89 312.9 94 315.2 99 317.8 104 320.0 109 321.3 114 322.6 119 324.7 124 328.2 129 332.8 134 337.1 139 340.1 144 341.6 149 342.3 154 343.4 159 345.4 164 347.8 169 349.7 174 350.8" stroke-width="1.9" stroke-opacity="0.85"/><path d="M-6 289.9 -1 291.0 4 291.1 9 291.2 14 292.3 19 294.3 24 296.4 29 297.8 34 298.6 39 299.5 44 301.7 49 305.3 54 309.6 59 313.2 64 315.4 69 316.3 74 316.9 79 318.2 84 320.6 89 323.2 94 325.3 99 326.6 104 327.7 109 329.7 114 333.2 119 337.8 124 342.1 129 345.2 134 346.7 139 347.5 144 348.6 149 350.6 154 353.0 159 354.8 164 355.7 169 356.0 174 356.9" stroke-width="1.9" stroke-opacity="0.85"/><path d="M-6 296.0 -1 296.2 4 297.3 9 299.3 14 301.4 19 302.7 24 303.3 29 304.2 34 306.4 39 310.0 44 314.4 49 318.2 54 320.5 59 321.5 64 322.3 69 323.7 74 326.1 79 328.8 84 330.8 89 331.9 94 332.9 99 334.8 104 338.3 109 342.9 114 347.2 119 350.3 124 351.9 129 352.7 134 353.9 139 355.9 144 358.3 149 360.0 154 360.8 159 360.9 164 361.6 169 363.8 174 367.5" stroke-width="1.9" stroke-opacity="0.85"/></g><g fill="none" stroke="#aaaaaa" stroke-linejoin="round" filter="url(#b05)"><path d="M-6 132.3 -1 136.2 4 140.3 9 143.7 14 145.7 19 147.0 24 148.3 29 150.2 34 152.6 39 154.8 44 156.3 49 157.1 54 158.0 59 160.0 64 163.1 69 166.9 74 170.1 79 172.3 84 173.4 89 174.3 94 175.7 99 177.8 104 179.8 109 181.2 114 181.8 119 182.3 124 183.7 129 186.3 134 190.0 139 193.7 144 196.6 149 198.4 154 199.9 159 201.7 164 204.1 169 206.8 174 208.9" stroke-width="3.7" stroke-opacity="0.75"/><path d="M-6 143.7 -1 147.0 4 149.1 9 150.4 14 151.8 19 153.7 24 156.2 29 158.3 34 159.7 39 160.4 44 161.2 49 163.0 54 166.1 59 169.8 64 173.0 69 175.2 74 176.4 79 177.4 84 178.9 89 181.0 94 183.1 99 184.5 104 185.0 109 185.5 114 186.7 119 189.4 124 193.1 129 196.8 134 199.8 139 201.7 144 203.2 149 205.2 154 207.7 159 210.5 164 212.6 169 213.8 174 214.4" stroke-width="3.7" stroke-opacity="0.75"/><path d="M-6 152.6 -1 154.0 4 155.4 9 157.4 14 159.8 19 161.9 24 163.2 29 163.7 34 164.4 39 166.1 44 169.1 49 172.8 54 176.0 59 178.2 64 179.4 69 180.5 74 182.1 79 184.3 84 186.5 89 187.9 94 188.4 99 188.8 104 190.0 109 192.6 114 196.3 119 200.1 124 203.0 129 205.0 134 206.7 139 208.8 144 211.4 149 214.3 154 216.4 159 217.6 164 218.1 169 219.1 174 221.3" stroke-width="3.8" stroke-opacity="0.75"/><path d="M-6 159.0 -1 161.0 4 163.5 9 165.5 14 166.7 19 167.1 24 167.6 29 169.3 34 172.2 39 175.8 44 179.1 49 181.3 54 182.6 59 183.7 64 185.5 69 187.8 74 190.0 79 191.4 84 191.8 89 192.2 94 193.4 99 196.0 104 199.6 109 203.4 114 206.4 119 208.5 124 210.2 129 212.4 134 215.2 139 218.1 144 220.3 149 221.4 154 221.9 159 222.8 164 224.9 169 228.2 174 232.0" stroke-width="3.8" stroke-opacity="0.75"/><path d="M-6 167.2 -1 169.2 4 170.3 9 170.6 14 171.0 19 172.5 24 175.4 29 178.9 34 182.2 39 184.4 44 185.7 49 187.0 54 188.9 59 191.3 64 193.6 69 195.0 74 195.5 79 195.7 84 196.9 89 199.4 94 203.1 99 206.9 104 209.9 109 212.0 114 213.9 119 216.2 124 219.1 129 222.1 134 224.3 139 225.4 144 225.8 149 226.6 154 228.6 159 231.8 164 235.5 169 238.6 174 240.7" stroke-width="3.9" stroke-opacity="0.75"/><path d="M-6 174.0 -1 174.2 4 174.5 9 175.9 14 178.6 19 182.2 24 185.4 29 187.6 34 189.0 39 190.4 44 192.4 49 194.9 54 197.3 59 198.7 64 199.2 69 199.5 74 200.5 79 203.1 84 206.7 89 210.5 94 213.5 99 215.7 104 217.6 109 220.0 114 223.1 119 226.1 124 228.4 129 229.4 134 229.7 139 230.4 144 232.3 149 235.5 154 239.0 159 242.0 164 244.1 169 245.7 174 247.7" stroke-width="3.9" stroke-opacity="0.75"/><path d="M-6 178.0 -1 179.3 4 182.0 9 185.5 14 188.6 19 190.9 24 192.4 29 193.8 34 196.0 39 198.6 44 201.1 49 202.6 54 203.1 59 203.3 64 204.4 69 206.9 74 210.5 79 214.2 84 217.3 89 219.4 94 221.4 99 223.9 104 227.1 109 230.3 114 232.5 119 233.5 124 233.8 129 234.4 134 236.2 139 239.2 144 242.6 149 245.5 154 247.5 159 249.1 164 251.1 169 253.8 174 256.8" stroke-width="4.0" stroke-opacity="0.75"/><path d="M-6 185.5 -1 188.9 4 192.0 9 194.3 14 195.8 19 197.4 24 199.7 29 202.5 34 205.1 39 206.7 44 207.1 49 207.3 54 208.4 59 210.8 64 214.4 69 218.1 74 221.1 79 223.3 84 225.3 89 227.9 94 231.2 99 234.4 104 236.7 109 237.7 114 237.9 119 238.4 124 240.1 129 243.0 134 246.3 139 249.1 144 251.0 149 252.6 154 254.6 159 257.4 164 260.4 169 262.8 174 263.8" stroke-width="4.0" stroke-opacity="0.75"/><path d="M-6 195.5 -1 197.8 4 199.3 9 201.0 14 203.5 19 206.5 24 209.2 29 210.8 34 211.3 39 211.5 44 212.5 49 214.9 54 218.4 59 222.1 64 225.0 69 227.2 74 229.3 79 232.0 84 235.3 89 238.7 94 241.0 99 242.0 104 242.1 109 242.5 114 244.1 119 246.8 124 250.0 129 252.7 134 254.5 139 256.1 144 258.1 149 261.0 154 264.1 159 266.6 164 267.7 169 267.6 174 267.5" stroke-width="4.1" stroke-opacity="0.75"/><path d="M-6 203.0 -1 204.8 4 207.4 9 210.5 14 213.4 19 215.1 24 215.6 29 215.8 34 216.8 39 219.1 44 222.6 49 226.2 54 229.1 59 231.2 64 233.3 69 236.1 74 239.6 79 243.0 84 245.3 89 246.3 94 246.3 99 246.7 104 248.1 109 250.8 114 253.9 119 256.4 124 258.1 129 259.6 134 261.7 139 264.6 144 267.9 149 270.5 154 271.6 159 271.6 164 271.5 169 272.3 174 274.4" stroke-width="4.1" stroke-opacity="0.75"/><path d="M-6 211.4 -1 214.7 4 217.7 9 219.5 14 220.1 19 220.3 24 221.2 29 223.5 34 226.9 39 230.4 44 233.2 49 235.4 54 237.5 59 240.3 64 243.8 69 247.3 74 249.7 79 250.6 84 250.7 89 250.9 94 252.3 99 254.8 104 257.8 109 260.2 114 261.8 119 263.3 124 265.4 129 268.4 134 271.7 139 274.4 144 275.6 149 275.7 154 275.6 159 276.4 164 278.4 169 281.3 174 283.9" stroke-width="4.2" stroke-opacity="0.75"/><path d="M-6 222.2 -1 224.1 4 224.7 9 224.9 14 225.8 19 228.0 24 231.4 29 234.8 34 237.5 39 239.6 44 241.6 49 244.5 54 248.1 59 251.7 64 254.1 69 255.1 74 255.0 79 255.2 84 256.5 89 259.0 94 261.8 99 264.0 104 265.6 109 267.0 114 269.1 119 272.2 124 275.7 129 278.4 134 279.8 139 279.9 144 279.8 149 280.6 154 282.7 159 285.5 164 288.0 169 289.9 174 291.5" stroke-width="4.2" stroke-opacity="0.75"/><path d="M-6 229.4 -1 229.6 4 230.5 9 232.7 14 235.9 19 239.3 24 241.9 29 243.8 34 245.9 39 248.8 44 252.5 49 256.1 54 258.6 59 259.5 64 259.5 69 259.6 74 260.8 79 263.2 84 265.9 89 268.0 94 269.4 99 270.8 104 272.9 109 276.1 114 279.7 119 282.6 124 284.0 129 284.2 134 284.1 139 285.0 144 287.1 149 289.8 154 292.3 159 294.1 164 295.7 169 298.0 174 301.4" stroke-width="4.3" stroke-opacity="0.75"/><path d="M-6 235.3 -1 237.5 4 240.6 9 243.8 14 246.3 19 248.2 24 250.2 29 253.1 34 256.9 39 260.6 44 263.1 49 264.1 54 264.0 59 264.1 64 265.2 69 267.5 74 270.0 79 272.0 84 273.4 89 274.7 94 276.8 99 280.1 104 283.8 109 286.8 114 288.3 119 288.6 124 288.6 129 289.6 134 291.7 139 294.4 144 296.8 149 298.5 154 300.1 159 302.3 164 305.8 169 310.1 174 314.2" stroke-width="4.3" stroke-opacity="0.75"/><path d="M-6 245.5 -1 248.5 4 250.9 9 252.6 14 254.6 19 257.5 24 261.3 29 265.1 34 267.7 39 268.6 44 268.6 49 268.6 54 269.7 59 271.9 64 274.3 69 276.2 74 277.4 79 278.6 84 280.8 89 284.1 94 288.0 99 291.1 104 292.8 109 293.1 114 293.3 119 294.3 124 296.4 129 299.1 134 301.4 139 303.1 144 304.6 149 306.8 154 310.3 159 314.7 164 318.9 169 321.7 174 323.0" stroke-width="4.4" stroke-opacity="0.75"/><path d="M-6 255.5 -1 257.2 4 259.1 9 261.9 14 265.8 19 269.6 24 272.2 29 273.2 34 273.2 39 273.2 44 274.3 49 276.4 54 278.7 59 280.5 64 281.6 69 282.8 74 284.9 79 288.3 84 292.3 89 295.5 94 297.3 99 297.8 104 298.1 109 299.1 114 301.3 119 304.0 124 306.2 129 307.8 134 309.2 139 311.4 144 315.0 149 319.4 154 323.7 159 326.6 164 327.9 169 328.6 174 329.6" stroke-width="4.4" stroke-opacity="0.75"/><path d="M-6 263.6 -1 266.4 4 270.3 9 274.2 14 276.9 19 277.9 24 277.8 29 277.9 34 279.0 39 281.0 44 283.3 49 284.9 54 285.9 59 287.0 64 289.1 69 292.6 74 296.7 79 300.1 84 302.0 89 302.6 94 303.0 99 304.1 104 306.3 109 309.0 114 311.2 119 312.7 124 314.0 129 316.2 134 319.7 139 324.2 144 328.5 149 331.5 154 332.9 159 333.6 164 334.6 169 336.6 174 339.0" stroke-width="4.5" stroke-opacity="0.75"/><path d="M-6 274.9 -1 278.8 4 281.5 9 282.6 14 282.6 19 282.7 24 283.8 29 285.8 34 287.9 39 289.4 44 290.3 49 291.4 54 293.5 59 297.1 64 301.2 69 304.8 74 306.8 79 307.5 84 308.0 89 309.3 94 311.6 99 314.2 104 316.4 109 317.7 114 318.9 119 321.0 124 324.6 129 329.1 134 333.5 139 336.5 144 338.0 149 338.7 154 339.8 159 341.7 164 344.1 169 346.1 174 347.1" stroke-width="4.5" stroke-opacity="0.75"/><path d="M-6 286.2 -1 287.4 4 287.4 9 287.5 14 288.6 19 290.6 24 292.7 29 294.1 34 294.9 39 295.9 44 298.0 49 301.6 54 305.9 59 309.6 64 311.7 69 312.6 74 313.2 79 314.6 84 316.9 89 319.6 94 321.6 99 322.9 104 324.0 109 326.0 114 329.5 119 334.1 124 338.5 129 341.5 134 343.0 139 343.8 144 345.0 149 346.9 154 349.3 159 351.2 164 352.1 169 352.4 174 353.2" stroke-width="4.6" stroke-opacity="0.75"/><path d="M-6 292.3 -1 292.5 4 293.6 9 295.6 14 297.7 19 299.0 24 299.6 29 300.5 34 302.7 39 306.3 44 310.7 49 314.5 54 316.8 59 317.8 64 318.5 69 320.0 74 322.4 79 325.1 84 327.1 89 328.2 94 329.2 99 331.1 104 334.6 109 339.2 114 343.5 119 346.6 124 348.2 129 349.0 134 350.2 139 352.2 144 354.5 149 356.3 154 357.0 159 357.2 164 357.9 169 360.1 174 363.7" stroke-width="4.6" stroke-opacity="0.75"/></g></g><g clip-path="url(#cr)"><g fill="none" stroke="#5e5e5e" stroke-linejoin="round" filter="url(#b05)"><path d="M312 184.6 317 184.5 322 184.6 327 185.0 332 185.7 337 186.6 342 187.4 347 187.9 352 188.3 357 188.8 362 189.5 367 190.3 372 190.9 377 191.2 382 191.3 387 191.3 392 191.6 397 192.2 402 193.0 407 193.7 412 194.3 417 194.7 422 195.1 427 195.6" stroke-width="0.6" stroke-opacity="0.05"/><path d="M312 185.5 317 185.9 322 186.6 327 187.5 332 188.3 337 188.9 342 189.3 347 189.9 352 190.6 357 191.4 362 192.1 367 192.4 372 192.5 377 192.5 382 192.8 387 193.4 392 194.2 397 194.9 402 195.5 407 195.9 412 196.3 417 196.8 422 197.6 427 198.2" stroke-width="0.6" stroke-opacity="0.06"/><path d="M312 187.5 317 188.4 322 189.2 327 189.8 332 190.3 337 190.9 342 191.6 347 192.5 352 193.2 357 193.6 362 193.7 367 193.7 372 193.9 377 194.5 382 195.3 387 196.0 392 196.6 397 197.0 402 197.4 407 198.0 412 198.8 417 199.5 422 199.9 427 200.0" stroke-width="0.6" stroke-opacity="0.07"/><path d="M312 190.1 317 190.7 322 191.2 327 191.8 332 192.6 337 193.5 342 194.3 347 194.7 352 194.8 357 194.8 362 195.0 367 195.6 372 196.4 377 197.1 382 197.7 387 198.1 392 198.5 397 199.1 402 200.0 407 200.7 412 201.2 417 201.2 422 201.2 427 201.2" stroke-width="0.6" stroke-opacity="0.09"/><path d="M312 192.1 317 192.7 322 193.6 327 194.6 332 195.4 337 195.8 342 195.9 347 195.9 352 196.1 357 196.7 362 197.5 367 198.2 372 198.7 377 199.1 382 199.6 387 200.2 392 201.1 397 201.9 402 202.4 407 202.5 412 202.4 417 202.5 422 202.9 427 203.5" stroke-width="0.6" stroke-opacity="0.11"/><path d="M312 194.5 317 195.5 322 196.4 327 196.8 332 196.9 337 196.9 342 197.2 347 197.7 352 198.5 357 199.2 362 199.7 367 200.1 372 200.6 377 201.3 382 202.2 387 203.1 392 203.6 397 203.8 402 203.7 407 203.8 412 204.2 417 204.8 422 205.6 427 206.1" stroke-width="0.6" stroke-opacity="0.13"/><path d="M312 197.4 317 197.9 322 198.0 327 198.0 332 198.2 337 198.8 342 199.5 347 200.2 352 200.7 357 201.1 362 201.6 367 202.3 372 203.3 377 204.2 382 204.8 387 205.0 392 205.0 397 205.0 402 205.5 407 206.2 412 206.9 417 207.5 422 207.9 427 208.4" stroke-width="0.6" stroke-opacity="0.15"/><path d="M312 199.0 317 199.0 322 199.2 327 199.8 332 200.5 337 201.2 342 201.7 347 202.1 352 202.5 357 203.4 362 204.4 367 205.4 372 206.0 377 206.2 382 206.2 387 206.3 392 206.8 397 207.5 402 208.2 407 208.8 412 209.2 417 209.8 422 210.6 427 211.7" stroke-width="0.6" stroke-opacity="0.17"/><path d="M312 200.2 317 200.8 322 201.5 327 202.2 332 202.6 337 203.0 342 203.5 347 204.3 352 205.5 357 206.5 362 207.2 367 207.4 372 207.5 377 207.6 382 208.1 387 208.8 392 209.6 397 210.2 402 210.6 407 211.1 412 212.0 417 213.2 422 214.5 427 215.6" stroke-width="0.6" stroke-opacity="0.20"/><path d="M312 202.5 317 203.1 322 203.6 327 203.9 332 204.4 337 205.3 342 206.5 347 207.6 352 208.4 357 208.7 362 208.7 367 208.9 372 209.4 377 210.2 382 211.0 387 211.6 392 212.0 397 212.5 402 213.4 407 214.7 412 216.1 417 217.2 422 217.8 427 218.1" stroke-width="0.6" stroke-opacity="0.23"/><path d="M312 204.5 317 204.8 322 205.4 327 206.3 332 207.5 337 208.7 342 209.5 347 209.9 352 210.0 357 210.2 362 210.8 367 211.6 372 212.4 377 213.0 382 213.4 387 213.9 392 214.9 397 216.2 402 217.7 407 218.8 412 219.5 417 219.8 422 220.1 427 220.7" stroke-width="0.6" stroke-opacity="0.26"/><path d="M312 206.3 317 207.2 322 208.5 327 209.8 332 210.7 337 211.1 342 211.3 347 211.6 352 212.2 357 213.0 362 213.8 367 214.4 372 214.8 377 215.4 382 216.3 387 217.7 392 219.3 397 220.5 402 221.2 407 221.6 412 221.9 417 222.5 422 223.3 427 224.1" stroke-width="0.6" stroke-opacity="0.29"/><path d="M312 209.6 317 210.9 322 211.9 327 212.4 332 212.6 337 212.9 342 213.6 347 214.5 352 215.3 357 215.9 362 216.3 367 216.8 372 217.8 377 219.3 382 220.9 387 222.2 392 222.9 397 223.3 402 223.7 407 224.3 412 225.2 417 226.0 422 226.5 427 226.7" stroke-width="0.6" stroke-opacity="0.32"/><path d="M312 213.1 317 213.6 322 213.9 327 214.3 332 215.0 337 216.0 342 216.8 347 217.4 352 217.8 357 218.3 362 219.3 367 220.8 372 222.5 377 223.8 382 224.7 387 225.1 392 225.5 397 226.2 402 227.0 407 227.9 412 228.4 417 228.6 422 228.8 427 229.3" stroke-width="0.7" stroke-opacity="0.36"/><path d="M312 215.2 317 215.7 322 216.5 327 217.5 332 218.4 337 218.9 342 219.3 347 219.8 352 220.8 357 222.4 362 224.1 367 225.5 372 226.4 377 226.9 382 227.3 387 228.0 392 228.9 397 229.8 402 230.3 407 230.4 412 230.6 417 231.1 422 232.3 427 233.7" stroke-width="0.7" stroke-opacity="0.40"/><path d="M312 218.0 317 219.1 322 220.0 327 220.5 332 220.8 337 221.3 342 222.4 347 224.0 352 225.8 357 227.2 362 228.2 367 228.7 372 229.2 377 229.9 382 230.9 387 231.7 392 232.2 397 232.3 402 232.4 407 232.9 412 234.1 417 235.6 422 237.0 427 238.0" stroke-width="0.7" stroke-opacity="0.45"/><path d="M312 221.6 317 222.2 322 222.4 327 222.9 332 224.0 337 225.6 342 227.4 347 229.0 352 229.9 357 230.5 362 231.0 367 231.8 372 232.8 377 233.7 382 234.1 387 234.2 392 234.2 397 234.8 402 235.9 407 237.5 412 239.0 417 240.0 422 240.5 427 241.0" stroke-width="0.8" stroke-opacity="0.49"/><path d="M312 224.1 317 224.5 322 225.5 327 227.2 332 229.1 337 230.7 342 231.7 347 232.3 352 232.9 357 233.7 362 234.8 367 235.7 372 236.1 377 236.1 382 236.1 387 236.6 392 237.8 397 239.4 402 241.0 407 242.0 412 242.6 417 243.2 422 244.0 427 245.1" stroke-width="0.8" stroke-opacity="0.55"/><path d="M312 227.2 317 228.9 322 230.8 327 232.4 332 233.5 337 234.1 342 234.7 347 235.7 352 236.8 357 237.8 362 238.2 367 238.1 372 238.1 377 238.5 382 239.7 387 241.4 392 243.0 397 244.1 402 244.8 407 245.4 412 246.3 417 247.6 422 248.8 427 249.5" stroke-width="0.9" stroke-opacity="0.60"/><path d="M312 232.5 317 234.2 322 235.3 327 235.9 332 236.6 337 237.6 342 238.9 347 239.9 352 240.3 357 240.2 362 240.1 367 240.5 372 241.7 377 243.4 382 245.1 387 246.2 392 247.0 397 247.7 402 248.7 407 250.1 412 251.4 417 252.2 422 252.5 427 252.5" stroke-width="0.9" stroke-opacity="0.66"/><path d="M312 237.1 317 237.8 322 238.5 327 239.6 332 240.9 337 242.0 342 242.4 347 242.3 352 242.1 357 242.5 362 243.7 367 245.5 372 247.2 377 248.4 382 249.2 387 250.0 392 251.2 397 252.7 402 254.2 407 255.1 412 255.3 417 255.3 422 255.7 427 256.8" stroke-width="1.0" stroke-opacity="0.73"/><path d="M312 240.4 317 241.6 322 243.0 327 244.2 332 244.6 337 244.4 342 244.2 347 244.6 352 245.8 357 247.6 362 249.4 367 250.7 372 251.5 377 252.4 382 253.7 387 255.4 392 257.0 397 258.0 402 258.3 407 258.3 412 258.6 417 259.8 422 261.7 427 263.7" stroke-width="1.0" stroke-opacity="0.80"/><path d="M312 245.2 317 246.4 322 246.8 327 246.6 332 246.4 337 246.7 342 248.0 347 249.9 352 251.7 357 253.0 362 253.9 367 254.9 372 256.4 377 258.3 382 260.0 387 261.1 392 261.4 397 261.4 402 261.7 407 262.9 412 264.8 417 266.9 422 268.5 427 269.7" stroke-width="1.1" stroke-opacity="0.85"/><path d="M312 249.1 317 248.9 322 248.6 327 249.0 332 250.3 337 252.2 342 254.0 347 255.4 352 256.4 357 257.5 362 259.1 367 261.2 372 263.1 377 264.3 382 264.7 387 264.6 392 265.0 397 266.2 402 268.1 407 270.2 412 271.9 417 273.1 422 274.2 427 275.7" stroke-width="1.1" stroke-opacity="0.85"/><path d="M312 250.9 317 251.3 322 252.6 327 254.6 332 256.5 337 257.9 342 259.0 347 260.2 352 262.0 357 264.3 362 266.4 367 267.7 372 268.1 377 268.0 382 268.4 387 269.6 392 271.6 397 273.7 402 275.3 407 276.5 412 277.7 417 279.3 422 281.5 427 283.8" stroke-width="1.2" stroke-opacity="0.85"/><path d="M312 255.1 317 257.1 322 259.1 327 260.6 332 261.7 337 263.0 342 265.0 347 267.4 352 269.8 357 271.2 362 271.6 367 271.6 372 271.9 377 273.2 382 275.2 387 277.3 392 279.0 397 280.1 402 281.3 407 283.0 412 285.4 417 287.8 422 289.5 427 290.0" stroke-width="1.3" stroke-opacity="0.85"/><path d="M312 262.2 317 263.6 322 264.8 327 266.2 332 268.3 337 270.9 342 273.4 347 274.9 352 275.4 357 275.4 362 275.7 367 277.0 372 279.0 377 281.0 382 282.6 387 283.7 392 284.9 397 286.6 402 289.1 407 291.6 412 293.4 417 294.0 422 293.7 427 293.5" stroke-width="1.3" stroke-opacity="0.85"/><path d="M312 268.4 317 269.8 322 272.0 327 274.7 332 277.3 337 278.9 342 279.4 347 279.4 352 279.8 357 281.0 362 282.9 367 284.8 372 286.3 377 287.3 382 288.4 387 290.2 392 292.6 397 295.2 402 297.0 407 297.6 412 297.4 417 297.2 422 297.7 427 298.9" stroke-width="1.3" stroke-opacity="0.85"/></g><g fill="none" stroke="#aaaaaa" stroke-linejoin="round" filter="url(#b05)"><path d="M312 183.8 317 183.7 322 183.8 327 184.2 332 184.9 337 185.8 342 186.6 347 187.1 352 187.5 357 188.0 362 188.7 367 189.5 372 190.1 377 190.4 382 190.5 387 190.5 392 190.8 397 191.4 402 192.2 407 192.9 412 193.5 417 193.9 422 194.3 427 194.8" stroke-width="1.0" stroke-opacity="0.05"/><path d="M312 184.7 317 185.1 322 185.8 327 186.7 332 187.5 337 188.1 342 188.5 347 189.1 352 189.8 357 190.6 362 191.3 367 191.6 372 191.7 377 191.7 382 192.0 387 192.5 392 193.3 397 194.1 402 194.7 407 195.0 412 195.4 417 196.0 422 196.8 427 197.4" stroke-width="1.0" stroke-opacity="0.05"/><path d="M312 186.7 317 187.6 322 188.4 327 189.0 332 189.5 337 190.0 342 190.8 347 191.7 352 192.4 357 192.7 362 192.8 367 192.8 372 193.1 377 193.7 382 194.5 387 195.2 392 195.8 397 196.1 402 196.6 407 197.2 412 198.0 417 198.7 422 199.1 427 199.1" stroke-width="1.0" stroke-opacity="0.07"/><path d="M312 189.2 317 189.8 322 190.3 327 191.0 332 191.8 337 192.7 342 193.4 347 193.8 352 193.9 357 193.9 362 194.2 367 194.7 372 195.5 377 196.3 382 196.8 387 197.2 392 197.6 397 198.3 402 199.1 407 199.9 412 200.3 417 200.4 422 200.3 427 200.3" stroke-width="1.1" stroke-opacity="0.08"/><path d="M312 191.2 317 191.8 322 192.7 327 193.7 332 194.5 337 194.9 342 195.0 347 195.0 352 195.2 357 195.8 362 196.6 367 197.3 372 197.8 377 198.2 382 198.7 387 199.4 392 200.2 397 201.0 402 201.5 407 201.6 412 201.5 417 201.6 422 202.0 427 202.6" stroke-width="1.1" stroke-opacity="0.09"/><path d="M312 193.6 317 194.6 322 195.5 327 195.9 332 196.0 337 196.0 342 196.3 347 196.8 352 197.6 357 198.3 362 198.8 367 199.2 372 199.7 377 200.4 382 201.3 387 202.2 392 202.7 397 202.8 402 202.8 407 202.9 412 203.3 417 203.9 422 204.6 427 205.2" stroke-width="1.1" stroke-opacity="0.11"/><path d="M312 196.5 317 196.9 322 197.0 327 197.0 332 197.3 337 197.8 342 198.6 347 199.3 352 199.8 357 200.1 362 200.6 367 201.4 372 202.4 377 203.3 382 203.9 387 204.0 392 204.0 397 204.1 402 204.5 407 205.2 412 205.9 417 206.5 422 206.9 427 207.4" stroke-width="1.2" stroke-opacity="0.13"/><path d="M312 198.0 317 198.0 322 198.2 327 198.8 332 199.5 337 200.2 342 200.7 347 201.1 352 201.6 357 202.4 362 203.4 367 204.4 372 205.0 377 205.2 382 205.2 387 205.4 392 205.8 397 206.5 402 207.3 407 207.8 412 208.3 417 208.8 422 209.6 427 210.8" stroke-width="1.2" stroke-opacity="0.15"/><path d="M312 199.2 317 199.7 322 200.5 327 201.2 332 201.6 337 202.0 342 202.5 347 203.3 352 204.4 357 205.5 362 206.2 367 206.4 372 206.5 377 206.6 382 207.1 387 207.8 392 208.6 397 209.2 402 209.6 407 210.1 412 211.0 417 212.2 422 213.5 427 214.5" stroke-width="1.3" stroke-opacity="0.17"/><path d="M312 201.4 317 202.1 322 202.5 327 202.9 332 203.4 337 204.3 342 205.4 347 206.6 352 207.3 357 207.6 362 207.7 367 207.9 372 208.4 377 209.2 382 209.9 387 210.5 392 210.9 397 211.5 402 212.4 407 213.6 412 215.0 417 216.1 422 216.8 427 217.1" stroke-width="1.3" stroke-opacity="0.20"/><path d="M312 203.4 317 203.7 322 204.2 327 205.2 332 206.4 337 207.6 342 208.4 347 208.8 352 208.9 357 209.1 362 209.7 367 210.5 372 211.3 377 211.9 382 212.3 387 212.8 392 213.8 397 215.1 402 216.6 407 217.7 412 218.4 417 218.7 422 219.0 427 219.6" stroke-width="1.4" stroke-opacity="0.23"/><path d="M312 205.1 317 206.1 322 207.4 327 208.7 332 209.6 337 210.0 342 210.1 347 210.4 352 211.0 357 211.9 362 212.7 367 213.3 372 213.7 377 214.2 382 215.2 387 216.6 392 218.1 397 219.3 402 220.1 407 220.4 412 220.8 417 221.3 422 222.1 427 223.0" stroke-width="1.4" stroke-opacity="0.25"/><path d="M312 208.4 317 209.7 322 210.7 327 211.2 332 211.4 337 211.7 342 212.4 347 213.3 352 214.1 357 214.7 362 215.1 367 215.6 372 216.6 377 218.1 382 219.6 387 220.9 392 221.7 397 222.1 402 222.5 407 223.1 412 224.0 417 224.8 422 225.3 427 225.5" stroke-width="1.5" stroke-opacity="0.29"/><path d="M312 211.8 317 212.4 322 212.6 327 213.0 332 213.8 337 214.7 342 215.6 347 216.1 352 216.5 357 217.0 362 218.0 367 219.6 372 221.2 377 222.6 382 223.4 387 223.8 392 224.2 397 224.9 402 225.8 407 226.6 412 227.1 417 227.3 422 227.5 427 228.1" stroke-width="1.6" stroke-opacity="0.32"/><path d="M312 213.9 317 214.4 322 215.2 327 216.2 332 217.1 337 217.6 342 218.0 347 218.5 352 219.5 357 221.1 362 222.8 367 224.2 372 225.1 377 225.6 382 226.0 387 226.7 392 227.6 397 228.5 402 228.9 407 229.1 412 229.2 417 229.8 422 230.9 427 232.4" stroke-width="1.7" stroke-opacity="0.35"/><path d="M312 216.6 317 217.7 322 218.6 327 219.1 332 219.5 337 220.0 342 221.0 347 222.6 352 224.4 357 225.8 362 226.8 367 227.3 372 227.8 377 228.5 382 229.5 387 230.3 392 230.8 397 230.9 402 231.0 407 231.5 412 232.7 417 234.2 422 235.6 427 236.6" stroke-width="1.7" stroke-opacity="0.39"/><path d="M312 220.1 317 220.7 322 221.0 327 221.4 332 222.5 337 224.1 342 226.0 347 227.5 352 228.5 357 229.0 362 229.5 367 230.4 372 231.4 377 232.2 382 232.7 387 232.7 392 232.8 397 233.3 402 234.5 407 236.0 412 237.5 417 238.5 422 239.1 427 239.6" stroke-width="1.8" stroke-opacity="0.44"/><path d="M312 222.5 317 223.0 322 224.0 327 225.7 332 227.6 337 229.2 342 230.2 347 230.7 352 231.3 357 232.2 362 233.3 367 234.2 372 234.6 377 234.6 382 234.6 387 235.1 392 236.3 397 237.9 402 239.4 407 240.5 412 241.1 417 241.6 422 242.5 427 243.6" stroke-width="1.9" stroke-opacity="0.48"/><path d="M312 225.5 317 227.2 322 229.2 327 230.8 332 231.9 337 232.5 342 233.1 347 234.1 352 235.2 357 236.1 362 236.6 367 236.5 372 236.5 377 236.9 382 238.1 387 239.8 392 241.4 397 242.5 402 243.1 407 243.8 412 244.7 417 245.9 422 247.1 427 247.9" stroke-width="2.0" stroke-opacity="0.53"/><path d="M312 230.8 317 232.5 322 233.5 327 234.2 332 234.9 337 235.9 342 237.1 347 238.1 352 238.6 357 238.5 362 238.3 367 238.8 372 240.0 377 241.7 382 243.3 387 244.5 392 245.2 397 246.0 402 247.0 407 248.4 412 249.7 417 250.5 422 250.8 427 250.8" stroke-width="2.1" stroke-opacity="0.58"/><path d="M312 235.2 317 235.9 322 236.7 327 237.8 332 239.1 337 240.2 342 240.6 347 240.5 352 240.3 357 240.7 362 241.9 367 243.7 372 245.4 377 246.6 382 247.4 387 248.2 392 249.4 397 250.9 402 252.4 407 253.3 412 253.5 417 253.5 422 253.9 427 255.0" stroke-width="2.3" stroke-opacity="0.64"/><path d="M312 238.5 317 239.7 322 241.1 327 242.2 332 242.7 337 242.5 342 242.3 347 242.7 352 243.9 357 245.7 362 247.5 367 248.8 372 249.6 377 250.5 382 251.8 387 253.5 392 255.1 397 256.1 402 256.4 407 256.4 412 256.7 417 257.9 422 259.8 427 261.8" stroke-width="2.4" stroke-opacity="0.70"/><path d="M312 243.1 317 244.3 322 244.8 327 244.6 332 244.3 337 244.7 342 246.0 347 247.8 352 249.6 357 251.0 362 251.9 367 252.9 372 254.4 377 256.2 382 258.0 387 259.1 392 259.4 397 259.4 402 259.7 407 260.9 412 262.8 417 264.8 422 266.5 427 267.7" stroke-width="2.5" stroke-opacity="0.75"/><path d="M312 247.0 317 246.8 322 246.5 327 246.8 332 248.1 337 250.0 342 251.9 347 253.3 352 254.3 357 255.4 362 257.0 367 259.0 372 261.0 377 262.2 382 262.5 387 262.5 392 262.8 397 264.0 402 266.0 407 268.1 412 269.7 417 270.9 422 272.0 427 273.6" stroke-width="2.7" stroke-opacity="0.75"/><path d="M312 248.6 317 249.0 322 250.3 327 252.3 332 254.2 337 255.7 342 256.7 347 257.9 352 259.7 357 262.0 362 264.1 367 265.4 372 265.8 377 265.7 382 266.1 387 267.3 392 269.3 397 271.4 402 273.1 407 274.2 412 275.4 417 277.0 422 279.2 427 281.5" stroke-width="2.9" stroke-opacity="0.75"/><path d="M312 252.6 317 254.7 322 256.7 327 258.1 332 259.2 337 260.6 342 262.5 347 265.0 352 267.3 357 268.8 362 269.2 367 269.2 372 269.5 377 270.7 382 272.7 387 274.9 392 276.5 397 277.7 402 278.8 407 280.6 412 282.9 417 285.3 422 287.0 427 287.6" stroke-width="3.0" stroke-opacity="0.75"/><path d="M312 259.6 317 261.1 322 262.3 327 263.7 332 265.7 337 268.4 342 270.9 347 272.4 352 272.9 357 272.9 362 273.2 367 274.4 372 276.4 377 278.5 382 280.1 387 281.2 392 282.3 397 284.1 402 286.5 407 289.1 412 290.8 417 291.4 422 291.2 427 291.0" stroke-width="3.1" stroke-opacity="0.75"/><path d="M312 265.9 317 267.3 322 269.5 327 272.2 332 274.8 337 276.4 342 276.9 347 276.9 352 277.2 357 278.4 362 280.3 367 282.3 372 283.8 377 284.8 382 285.9 387 287.6 392 290.1 397 292.6 402 294.4 407 295.1 412 294.9 417 294.7 422 295.1 427 296.4" stroke-width="3.1" stroke-opacity="0.75"/></g></g><ellipse cx="332.0" cy="206.7" rx="7.0" ry="1.2" fill="#5e5e5e" filter="url(#b05)"/><ellipse cx="360.5" cy="208.5" rx="8.0" ry="1.8" fill="#5e5e5e" filter="url(#b05)"/><ellipse cx="373.0" cy="216.5" rx="3.5" ry="1.0" fill="#5e5e5e" filter="url(#b05)"/><ellipse cx="390.5" cy="213.0" rx="12.0" ry="2.6" fill="#5e5e5e" filter="url(#b05)"/><ellipse cx="399.0" cy="220.5" rx="9.0" ry="1.8" fill="#5e5e5e" filter="url(#b05)"/><ellipse cx="403.5" cy="227.0" rx="9.0" ry="1.6" fill="#5e5e5e" filter="url(#b05)"/><ellipse cx="404.0" cy="201.7" rx="7.0" ry="1.6" fill="#5e5e5e" filter="url(#b05)"/><ellipse cx="412.0" cy="238.0" rx="5.0" ry="2.0" fill="#5e5e5e" filter="url(#b05)"/><ellipse cx="356.0" cy="212.0" rx="4.0" ry="1.2" fill="#5e5e5e" filter="url(#b05)"/><rect x="0" y="112" width="9" height="22" fill="#303030" filter="url(#b1)"/><rect x="0" y="134" width="9" height="29" fill="#8c8c8c"/><rect x="0" y="163" width="9" height="62" fill="#000" opacity="0.14"/></svg>
<div style="left:80.5px;top:88.8px;width:423.0px;height:1.0px;background:#5b86d6;"></div>
<div style="left:80.5px;top:369.5px;width:423.0px;height:1.0px;background:#5b86d6;"></div>
<div style="left:80.5px;top:88.8px;width:1.0px;height:281.7px;background:#5b86d6;"></div>
<div style="left:502.7px;top:88.8px;width:1.0px;height:281.7px;background:#5b86d6;"></div>
<div style="left:78.0px;top:86.3px;width:6.0px;height:6.0px;background:#fff;border:1px solid #5b86d6"></div>
<div style="left:289.0px;top:86.3px;width:6.0px;height:6.0px;background:#fff;border:1px solid #5b86d6"></div>
<div style="left:500.2px;top:86.3px;width:6.0px;height:6.0px;background:#fff;border:1px solid #5b86d6"></div>
<div style="left:78.0px;top:226.6px;width:6.0px;height:6.0px;background:#fff;border:1px solid #5b86d6"></div>
<div style="left:500.2px;top:226.6px;width:6.0px;height:6.0px;background:#fff;border:1px solid #5b86d6"></div>
<div style="left:78.0px;top:367.0px;width:6.0px;height:6.0px;background:#fff;border:1px solid #5b86d6"></div>
<div style="left:289.0px;top:367.0px;width:6.0px;height:6.0px;background:#fff;border:1px solid #5b86d6"></div>
<div style="left:500.2px;top:367.0px;width:6.0px;height:6.0px;background:#fff;border:1px solid #5b86d6"></div>
<div style="left:53.0px;top:424.0px;width:478.5px;height:11.0px;background:#484848;"></div>
<span class="t t" style="left:55.0px;top:424.0px;color:#e8e8e8;font-size:9px">18.11%</span>
<div style="left:86.0px;top:424.0px;width:126.0px;height:11.0px;background:#4d4d4d;"></div>
<span class="t t" style="left:92.5px;top:424.0px;color:#c4c4c4;font-size:7.700px;letter-spacing:-0.400px">6000 픽셀 x 4000 픽셀 (300 ppi)</span>
<svg style="left:202.500px;top:427px" width="5" height="7" viewBox="0 0 5 7"><path d="M1 0.800L3.800 3.500 1 6.200" stroke="#c0c0c0" stroke-width="1" fill="none"/></svg>
<svg style="left:216.500px;top:427px" width="5" height="7" viewBox="0 0 5 7"><path d="M3.800 0.800L1 3.500 3.800 6.200" stroke="#9a9a9a" stroke-width="1" fill="none"/></svg>
<svg style="left:511.500px;top:427px" width="5" height="7" viewBox="0 0 5 7"><path d="M1 0.800L3.800 3.500 1 6.200" stroke="#b0b0b0" stroke-width="1" fill="none"/></svg>
<div style="left:310.7px;top:426.0px;width:109.1px;height:7.0px;background:#686868;border-radius:1px"></div>
<div style="left:520.0px;top:424.0px;width:11.5px;height:11.0px;background:#4c4c4c;"></div>
<div style="left:174.0px;top:385.0px;width:245.3px;height:23.7px;background:#4a4a4a;border-radius:3px"></div>
<div style="left:177.0px;top:388.0px;width:3.0px;height:1.3px;background:#d8d8d8;"></div>
<div style="left:177.0px;top:391.1px;width:3.0px;height:1.3px;background:#d8d8d8;"></div>
<div style="left:177.0px;top:394.2px;width:3.0px;height:1.3px;background:#d8d8d8;"></div>
<div style="left:177.0px;top:397.3px;width:3.0px;height:1.3px;background:#d8d8d8;"></div>
<div style="left:177.0px;top:400.4px;width:3.0px;height:1.3px;background:#d8d8d8;"></div>
<div style="left:177.0px;top:403.5px;width:3.0px;height:1.3px;background:#d8d8d8;"></div>
<div style="left:186.5px;top:387.8px;width:78.5px;height:17.5px;background:#4a4a4a;border:1px solid #686868;border-radius:2.500px"></div>
<div style="left:269.0px;top:387.8px;width:71.0px;height:17.5px;background:#4a4a4a;border:1px solid #686868;border-radius:2.500px"></div>
<svg style="left:194px;top:392px" width="10" height="10" viewBox="0 0 10 10"><circle cx="5" cy="3.200" r="2.200" fill="#ddd"/><path d="M0.500 9.500c0-2.500 2-3.800 4.500-3.800s4.500 1.300 4.500 3.800z" fill="#ddd"/></svg>
<span class="t t" style="left:208.0px;top:390.6px;color:#e0e0e0;font-size:7.800px;letter-spacing:2px;word-spacing:-3px">피사체 선택</span>
<div style="left:402.0px;top:396.0px;width:1.8px;height:1.8px;background:#ddd;"></div>
<div style="left:405.5px;top:396.0px;width:1.8px;height:1.8px;background:#ddd;"></div>
<div style="left:409.0px;top:396.0px;width:1.8px;height:1.8px;background:#ddd;"></div>
<div style="left:532.3px;top:47.3px;width:213.0px;height:8.4px;background:#424242;"></div>
<span class="t t" style="left:736.0px;top:44.8px;color:#b8b8b8;font-size:9.500px">&#187;</span>
<div style="left:532.3px;top:55.7px;width:213.0px;height:18.6px;background:#424242;"></div>
<div style="left:533.0px;top:55.7px;width:34.0px;height:19.3px;background:#515151;"></div>
<div style="left:567.5px;top:55.7px;width:0.8px;height:18.6px;background:#3a3a3a;"></div>
<div style="left:594.0px;top:55.7px;width:0.8px;height:18.6px;background:#3a3a3a;"></div>
<div style="left:620.5px;top:55.7px;width:0.8px;height:18.6px;background:#3a3a3a;"></div>
<span class="t pt tb" style="left:533.0px;width:34.0px;top:59.0px;color:#ececec;font-weight:bold;text-align:center">레이어</span>
<span class="t pt tb" style="left:568.0px;width:26.0px;top:59.0px;color:#a8a8a8;text-align:center">채널</span>
<span class="t pt tb" style="left:595.0px;width:25.5px;top:59.0px;color:#a8a8a8;text-align:center">패스</span>
<div style="left:734.0px;top:63.0px;width:8.0px;height:0.9px;background:#a8a8a8;"></div>
<div style="left:734.0px;top:64.6px;width:8.0px;height:0.9px;background:#a8a8a8;"></div>
<div style="left:734.0px;top:66.2px;width:8.0px;height:0.9px;background:#a8a8a8;"></div>
<div style="left:734.0px;top:67.8px;width:8.0px;height:0.9px;background:#a8a8a8;"></div>
<div style="left:532.3px;top:74.3px;width:213.0px;height:321.2px;background:#515151;"></div>
<div style="left:532.3px;top:395.5px;width:213.0px;height:1.3px;background:#3e3e3e;"></div>
<div style="left:532.3px;top:396.8px;width:213.0px;height:15.7px;background:#515151;"></div>
<div style="left:532.3px;top:412.5px;width:213.0px;height:2.5px;background:#3a3a3a;"></div>
<div style="left:532.3px;top:415.0px;width:213.0px;height:19.5px;background:#424242;"></div>
<div style="left:533.0px;top:415.0px;width:26.0px;height:19.5px;background:#515151;"></div>
<div style="left:559.5px;top:415.0px;width:0.8px;height:19.5px;background:#3a3a3a;"></div>
<div style="left:586.5px;top:415.0px;width:0.8px;height:19.5px;background:#3a3a3a;"></div>
<div style="left:635.5px;top:415.0px;width:0.8px;height:19.5px;background:#3a3a3a;"></div>
<div style="left:679.5px;top:415.0px;width:0.8px;height:19.5px;background:#3a3a3a;"></div>
<span class="t pt tb" style="left:533.0px;width:26.0px;top:418.5px;color:#ececec;font-weight:bold;text-align:center">속성</span>
<span class="t pt tb" style="left:560.0px;width:26.5px;top:418.5px;color:#a8a8a8;text-align:center">조정</span>
<span class="t pt tb" style="left:587.0px;width:48.5px;top:418.5px;color:#a8a8a8;text-align:center">라이브러리</span>
<span class="t pt tb" style="left:636.0px;width:43.5px;top:418.5px;color:#a8a8a8;text-align:center">작업 내역</span>
<div style="left:734.0px;top:421.5px;width:8.0px;height:6.0px;background:#8c8c8c;"></div>
<div style="left:536.0px;top:81.5px;width:56.0px;height:11.5px;background:#404040;border-radius:2px"></div>
<svg style="left:540.500px;top:84px" width="8" height="8" viewBox="0 0 8 8"><circle cx="3.200" cy="3.200" r="2.400" fill="none" stroke="#ddd" stroke-width="1.200"/><path d="M5 5l2.600 2.600" stroke="#ddd" stroke-width="1.300"/></svg>
<span class="t pt" style="left:551.0px;top:81.3px;color:#d8d8d8">종류</span>
<svg style="left:585px;top:86.500px" width="6" height="4" viewBox="0 0 6 4"><path d="M0.500 0.500L3 3l2.500-2.500" stroke="#c8c8c8" stroke-width="1" fill="none"/></svg>
<svg style="left:604px;top:83.500px" width="10" height="9" viewBox="0 0 10 9"><rect x="0.600" y="0.600" width="8.800" height="7.800" fill="none" stroke="#d4d4d4" stroke-width="1.200"/><path d="M1.500 7l2.500-3 1.800 2 1.200-1 1.500 2z" fill="#d4d4d4"/></svg>
<svg style="left:620px;top:83px" width="10" height="10" viewBox="0 0 10 10"><circle cx="5" cy="5" r="4.200" fill="none" stroke="#d4d4d4" stroke-width="1.200"/><path d="M2 8A4.200 4.200 0 0 1 8 2z" fill="#d4d4d4"/></svg>
<span class="t t" style="left:636.0px;top:81.5px;color:#d8d8d8;font-family:'Liberation Serif',serif;font-weight:bold;font-size:11.500px">T</span>
<svg style="left:652.500px;top:83px" width="10" height="10" viewBox="0 0 10 10"><rect x="1.500" y="1.500" width="7" height="7" fill="none" stroke="#d4d4d4" stroke-width="1.100"/><g fill="#d4d4d4"><rect x="0" y="0" width="2.600" height="2.600"/><rect x="7.400" y="0" width="2.600" height="2.600"/><rect x="0" y="7.400" width="2.600" height="2.600"/><rect x="7.400" y="7.400" width="2.600" height="2.600"/></g></svg>
<svg style="left:669.500px;top:83px" width="10" height="10" viewBox="0 0 10 10"><path d="M3 0.500h4l2.500 2.500v6.500h-6.500z" fill="none" stroke="#d4d4d4" stroke-width="1.100"/><rect x="0.300" y="4.500" width="5.400" height="5" fill="#d4d4d4"/></svg>
<div style="left:689.5px;top:80.5px;width:6.0px;height:12.0px;background:#464646;border-radius:3px;border:1px solid #3c3c3c"></div>
<div style="left:689.7px;top:80.5px;width:5.6px;height:5.5px;background:#d8d8d8;border-radius:3px"></div>
<div style="left:532.3px;top:96.5px;width:213.0px;height:0.8px;background:#484848;"></div>
<div style="left:536.0px;top:101.5px;width:78.0px;height:11.5px;background:#404040;border-radius:2px"></div>
<span class="t pt" style="left:540.5px;top:101.3px;color:#d8d8d8">표준</span>
<svg style="left:607.500px;top:106.500px" width="6" height="4" viewBox="0 0 6 4"><path d="M0.500 0.500L3 3l2.500-2.500" stroke="#c8c8c8" stroke-width="1" fill="none"/></svg>
<span class="t pt" style="left:619.4px;top:101.3px;color:#c4c4c4">불투명도:</span>
<div style="left:658.5px;top:101.5px;width:25.5px;height:11.5px;background:#404040;border-radius:2px"></div>
<span class="t t" style="left:660.0px;top:101.3px;color:#e6e6e6;font-size:8.500px;letter-spacing:-0.300px">100%</span>
<div style="left:686.0px;top:101.5px;width:9.0px;height:11.5px;background:#404040;border-radius:2px"></div>
<svg style="left:687.500px;top:106.500px" width="6" height="4" viewBox="0 0 6 4"><path d="M0.500 0.500L3 3l2.500-2.500" stroke="#c8c8c8" stroke-width="1" fill="none"/></svg>
<div style="left:532.3px;top:115.8px;width:213.0px;height:0.8px;background:#474747;"></div>
<span class="t pt" style="left:536.0px;top:120.5px;color:#b8b8b8">잠그기:</span>
<svg style="left:570.500px;top:123.500px" width="9" height="9" viewBox="0 0 9 9"><rect x="0.500" y="0.500" width="8" height="8" fill="none" stroke="#bdbdbd" stroke-dasharray="1.500 1"/><rect x="2" y="2" width="2.200" height="2.200" fill="#bdbdbd"/><rect x="4.800" y="4.800" width="2.200" height="2.200" fill="#bdbdbd"/><rect x="4.800" y="2" width="2.200" height="2.200" fill="#8a8a8a"/><rect x="2" y="4.800" width="2.200" height="2.200" fill="#8a8a8a"/></svg>
<svg style="left:585.500px;top:123px" width="9" height="10" viewBox="0 0 9 10"><path d="M8.500 0.500L4 5.500" stroke="#bdbdbd" stroke-width="1.500"/><path d="M1 9.500c0-2 1-3.500 2.800-3.500l1 1c0 1.700-1.800 2.500-3.800 2.500z" fill="#bdbdbd"/></svg>
<svg style="left:598.500px;top:122.500px" width="10" height="10" viewBox="0 0 12 12"><path d="M6 0l2.200 2.600H6.600v2.800h2.800V3.800L12 6l-2.600 2.200V6.600H6.600v2.800h1.600L6 12 3.800 9.400h1.600V6.600H2.600v1.600L0 6l2.600-2.200v1.600h2.800V2.600H3.800z" fill="#d8d8d8"/></svg>
<svg style="left:614.500px;top:122.500px" width="11" height="10" viewBox="0 0 11 10"><path d="M2.500 0v8h8M0 2.500h8v7.500" fill="none" stroke="#d0d0d0" stroke-width="1.300"/><path d="M9 0l2 2-2 2z" fill="#d0d0d0"/></svg>
<svg style="left:631px;top:123.300px" width="7.200" height="8.800" viewBox="0 0 8 10"><rect x="0" y="4.200" width="8" height="5.800" rx="0.800" fill="#e0e0e0"/><path d="M1.800 4.500V3a2.200 2.200 0 0 1 4.400 0v1.500" fill="none" stroke="#e0e0e0" stroke-width="1.200"/></svg>
<span class="t pt" style="left:644.0px;top:120.5px;color:#b8b8b8">칠:</span>
<div style="left:658.5px;top:121.0px;width:25.5px;height:11.5px;background:#404040;border-radius:2px"></div>
<span class="t t" style="left:660.0px;top:120.8px;color:#e6e6e6;font-size:8.500px;letter-spacing:-0.300px">100%</span>
<div style="left:686.0px;top:121.0px;width:9.0px;height:11.5px;background:#404040;border-radius:2px"></div>
<svg style="left:687.500px;top:126px" width="6" height="4" viewBox="0 0 6 4"><path d="M0.500 0.500L3 3l2.500-2.500" stroke="#c8c8c8" stroke-width="1" fill="none"/></svg>
<div style="left:532.3px;top:135.5px;width:213.0px;height:1.0px;background:#424242;"></div>
<div style="left:533.0px;top:138.7px;width:195.0px;height:20.3px;background:#626262;"></div>
<div style="left:728.0px;top:138.7px;width:6.0px;height:20.3px;background:#4a4a4a;"></div>
<div style="left:552.7px;top:138.7px;width:0.8px;height:53.3px;background:#454545;"></div>
<svg style="left:538.0px;top:145.5px" width="10" height="7" viewBox="0 0 10 7"><path d="M0.300 3.500C1.700 1.300 3.300 0.400 5 0.400s3.300.9 4.700 3.100C8.300 5.700 6.700 6.600 5 6.600S1.700 5.700 0.300 3.500z" fill="#e6e6e6"/><circle cx="5" cy="3.500" r="1.900" fill="#555"/><circle cx="5" cy="3.500" r="0.900" fill="#e6e6e6"/></svg>
<svg style="left:565.5px;top:165.0px" width="10" height="7" viewBox="0 0 10 7"><path d="M0.300 3.500C1.700 1.300 3.300 0.400 5 0.400s3.300.9 4.700 3.100C8.300 5.700 6.700 6.600 5 6.600S1.700 5.700 0.300 3.500z" fill="#e6e6e6"/><circle cx="5" cy="3.500" r="1.900" fill="#555"/><circle cx="5" cy="3.500" r="0.900" fill="#e6e6e6"/></svg>
<svg style="left:577.3px;top:181.0px" width="10" height="7" viewBox="0 0 10 7"><path d="M0.300 3.500C1.700 1.300 3.300 0.400 5 0.400s3.300.9 4.700 3.100C8.300 5.700 6.700 6.600 5 6.600S1.700 5.700 0.300 3.500z" fill="#e6e6e6"/><circle cx="5" cy="3.500" r="1.900" fill="#555"/><circle cx="5" cy="3.500" r="0.900" fill="#e6e6e6"/></svg>
<div style="left:554.3px;top:139.8px;width:24.4px;height:17.5px;background:#9a9a9a;border:1px solid #d0d0d0;background:linear-gradient(#b8b8b8 0%,#d2d2d2 30%,#8a8a8a 42%,#6e6e6e 60%,#8c8c8c 100%)"></div>
<div style="left:569.5px;top:149.5px;width:8.0px;height:6.8px;background:#4a4a4a;border:1px solid #333"></div>
<div style="left:571.3px;top:151.3px;width:4.5px;height:3.7px;background:#e8e8e8;"></div>
<span class="t pt" style="left:584.0px;top:143.0px;color:#dcdcdc;letter-spacing:0.600px">레이어 0</span>
<svg style="left:714.500px;top:145.500px" width="10" height="8" viewBox="0 0 10 8"><circle cx="3.500" cy="4.500" r="3" fill="none" stroke="#c8c8c8" stroke-width="0.900"/><circle cx="6.300" cy="3.300" r="3" fill="none" stroke="#c8c8c8" stroke-width="0.900"/></svg>
<svg style="left:729.500px;top:147.500px" width="5" height="4" viewBox="0 0 5 4"><path d="M0.500 3L2.500 1l2 2" stroke="#ddd" stroke-width="1" fill="none"/></svg>
<div style="left:577.7px;top:161.8px;width:21.3px;height:14.4px;background:#fff;"></div>
<span class="t pt" style="left:606.5px;top:161.5px;color:#d0d0d0;letter-spacing:0.600px">스마트 필터</span>
<span class="t pt" style="left:591.5px;top:177.5px;color:#d0d0d0">흑백</span>
<svg style="left:719.500px;top:182px" width="10" height="8" viewBox="0 0 10 8"><path d="M0 1.500h10M0 5.500h10" stroke="#d8d8d8" stroke-width="1.100"/><path d="M3 0h4l-2 3zM5 4h4l-2 3z" fill="#d8d8d8"/></svg>
<div style="left:532.3px;top:192.0px;width:213.0px;height:0.8px;background:#454545;"></div>
<div style="left:735.8px;top:197.0px;width:0.8px;height:198.5px;background:#494949;"></div>
<svg style="left:606.500px;top:401.500px" width="11" height="7" viewBox="0 0 11 7"><rect x="0.500" y="1.500" width="5" height="4" rx="2" fill="none" stroke="#8c8c8c" stroke-width="1"/><rect x="5.500" y="1.500" width="5" height="4" rx="2" fill="none" stroke="#8c8c8c" stroke-width="1"/><path d="M3 3.500h5" stroke="#8c8c8c"/></svg>
<span class="t t" style="left:626.0px;top:398.0px;color:#d6d6d6;font-size:9.500px;font-family:'Liberation Serif',serif"><i>fx</i></span>
<div style="left:634.0px;top:408.0px;width:2.5px;height:1.5px;background:#d0d0d0;"></div>
<svg style="left:644.500px;top:400.500px" width="10" height="8" viewBox="0 0 10 8"><rect width="10" height="8" rx="1" fill="#cfcfcf"/><circle cx="5" cy="4" r="2.300" fill="#4a4a4a"/></svg>
<svg style="left:663.500px;top:400px" width="9" height="9" viewBox="0 0 9 9"><circle cx="4.500" cy="4.500" r="3.800" fill="none" stroke="#cfcfcf" stroke-width="1.100"/><path d="M1.800 7.200A3.800 3.800 0 0 1 7.200 1.800z" fill="#cfcfcf"/></svg>
<div style="left:671.0px;top:408.0px;width:2.5px;height:1.5px;background:#d0d0d0;"></div>
<svg style="left:681.500px;top:400.500px" width="10" height="8" viewBox="0 0 10 8"><path d="M0 0.800h3.800l1 1.200H10V8H0z" fill="#cfcfcf"/></svg>
<svg style="left:700.500px;top:400px" width="9" height="9" viewBox="0 0 9 9"><rect x="0.600" y="0.600" width="7.800" height="7.800" rx="1" fill="none" stroke="#cfcfcf" stroke-width="1.100"/><path d="M4.500 2.500v4M2.500 4.500h4" stroke="#cfcfcf" stroke-width="1.100"/></svg>
<svg style="left:719.500px;top:399.500px" width="8" height="10" viewBox="0 0 8 10"><path d="M0 1.800h8M2.800 1.500V0.500h2.400v1M1 2.500l.5 7h5l.5-7" fill="none" stroke="#7c7c7c" stroke-width="1"/><path d="M3 4v4M5 4v4" stroke="#7c7c7c" stroke-width="0.800"/></svg>
<div style="left:5.0px;top:68.0px;width:20.0px;height:14.5px;background:#383838;border-radius:1px"></div>
<svg style="left:9.4px;top:70.2px" width="10.1" height="10.1" viewBox="0 0 12 12"><path d="M6 0l2.200 2.600H6.600v2.800h2.800V3.800L12 6l-2.600 2.200V6.600H6.600v2.800h1.600L6 12 3.800 9.400h1.600V6.600H2.600v1.600L0 6l2.600-2.200v1.600h2.800V2.600H3.800z" fill="#f0f0f0"/></svg>
<svg style="left:31.5px;top:70.7px" width="12.0" height="9.2" viewBox="0 0 13 10"><rect x="0.700" y="0.700" width="11.600" height="8.600" fill="none" stroke="#d2d2d2" stroke-width="1.300" stroke-dasharray="2.600 1.600"/></svg>
<svg style="left:8.5px;top:87.9px" width="12.0" height="10.1" viewBox="0 0 13 11"><ellipse cx="6.800" cy="4.300" rx="5.600" ry="3.600" fill="none" stroke="#d2d2d2" stroke-width="1.200"/><path d="M3 7.500c-1.500 0-1.800 1.500-.6 2 .8.300 1.400 0 1.600-.8M3.600 8.500L2.800 11" fill="none" stroke="#d2d2d2" stroke-width="1"/></svg>
<svg style="left:31.1px;top:87.5px" width="12.9" height="11.0" viewBox="0 0 14 12"><path d="M7 2.500A4 4 0 1 0 8 9.500" fill="none" stroke="#d2d2d2" stroke-width="1.100" stroke-dasharray="1.800 1.200"/><path d="M12.800 0.800L8 6.500" stroke="#d2d2d2" stroke-width="1.700"/><path d="M5.200 10.800c.2-1.800 1-3.200 2.600-3.400l1.200 1.200c-.2 1.600-1.800 2.300-3.800 2.200z" fill="#d2d2d2"/></svg>
<svg style="left:8.5px;top:104.7px" width="12.0" height="12.0" viewBox="0 0 13 13"><path d="M3.200 0v9.800H13M0 3.200h9.800V13" fill="none" stroke="#d2d2d2" stroke-width="1.400"/></svg>
<svg style="left:32.0px;top:106.1px" width="11.0" height="9.2" viewBox="0 0 12 10"><rect x="0.600" y="0.600" width="10.800" height="8.800" fill="none" stroke="#d2d2d2" stroke-width="1.200"/><path d="M0.600 0.600l10.800 8.800M11.400 0.600L0.600 9.400" stroke="#d2d2d2" stroke-width="1"/></svg>
<svg style="left:9.0px;top:122.8px" width="11.0" height="11.0" viewBox="0 0 12 12"><path d="M1 11l.6-2.200L7 3.400l1.600 1.600-5.400 5.400z" fill="none" stroke="#d2d2d2" stroke-width="1"/><path d="M6.500 2l3.500 3.500M8 3.200l1.800-1.800c.6-.6 1.400-.6 1.900 0 .5.500.5 1.300 0 1.800L9.800 5z" stroke="#d2d2d2" stroke-width="1.200" fill="#d2d2d2"/></svg>
<svg style="left:31.5px;top:122.3px" width="12.0" height="12.0" viewBox="0 0 13 13"><g transform="rotate(-45 6.500 6.500)"><rect x="0" y="3.600" width="13" height="5.800" rx="2.900" fill="#d2d2d2"/><rect x="4.300" y="3.600" width="4.400" height="5.800" fill="#9a9a9a"/></g><path d="M2 2.500a3 3 0 0 1 3.500-1.500" stroke="#d2d2d2" stroke-width="0.900" fill="none" stroke-dasharray="1.200 1"/></svg>
<svg style="left:9.0px;top:140.8px" width="11.0" height="11.0" viewBox="0 0 12 12"><path d="M11.500 0.500L5.500 7" stroke="#d2d2d2" stroke-width="1.900" stroke-linecap="round"/><path d="M0.800 11.500c.2-2.300 1-4 3-4.300l1.500 1.500c-.2 2-2.200 2.900-4.500 2.800z" fill="#d2d2d2"/></svg>
<svg style="left:32.4px;top:140.8px" width="10.1" height="11.0" viewBox="0 0 11 12"><path d="M3.800 0.800h3.400c.8 0 1.200.8.900 1.500L7.200 5.500h2.300c.8 0 1.500.6 1.500 1.400V8.500H0V6.900c0-.8.700-1.400 1.500-1.400h2.300L2.900 2.300C2.600 1.600 3 .8 3.800.8z" fill="#d2d2d2"/><rect x="0" y="9.800" width="11" height="1.600" fill="#d2d2d2"/></svg>
<svg style="left:8.5px;top:158.5px" width="12.0" height="11.0" viewBox="0 0 13 12"><path d="M12.500 0.500L7.500 6.500" stroke="#d2d2d2" stroke-width="1.800" stroke-linecap="round"/><path d="M3.200 11.500c.2-2 .9-3.500 2.700-3.800l1.400 1.400c-.2 1.800-2 2.500-4.100 2.400z" fill="#d2d2d2"/><path d="M1 5.500a4 4 0 0 1 5-3.500" fill="none" stroke="#d2d2d2" stroke-width="1"/><path d="M0 3l1.200 3 2.300-2z" fill="#d2d2d2"/></svg>
<svg style="left:31.5px;top:158.9px" width="12.0" height="10.1" viewBox="0 0 13 11"><path d="M7.500 0.600l5 3.800-5 5.200H4.800L1 6.600z" fill="#d2d2d2"/><path d="M1.600 7l3.300 2.500h2.400" fill="none" stroke="#535353" stroke-width="0"/><path d="M3.400 4.800l4.600 3.600" stroke="#535353" stroke-width="1"/><path d="M3 10.500h9.500" stroke="#d2d2d2" stroke-width="1"/></svg>
<div style="left:9.0px;top:176.7px;width:11px;height:9.500px;border:1px solid #d8d8d8;background:linear-gradient(90deg,#2c2c2c,#d8d8d8)"></div>
<svg style="left:33.8px;top:176.6px" width="7.4" height="10.1" viewBox="0 0 8 11"><path d="M4 0.300C5.500 3 7.600 5.200 7.600 7.400a3.600 3.600 0 0 1-7.200 0C.4 5.200 2.500 3 4 .3z" fill="#d2d2d2"/></svg>
<svg style="left:9.0px;top:193.8px" width="11.0" height="11.0" viewBox="0 0 12 12"><path d="M9.500 0.800L4 7" stroke="#d2d2d2" stroke-width="1.700" stroke-linecap="round"/><path d="M0.800 11c.2-1.800.9-3.200 2.500-3.500l1.200 1.200c-.2 1.700-1.700 2.400-3.700 2.300z" fill="#d2d2d2"/><circle cx="8.600" cy="8.600" r="2.300" fill="none" stroke="#d2d2d2" stroke-width="1.300"/></svg>
<svg style="left:32.0px;top:193.8px" width="11.0" height="11.0" viewBox="0 0 12 12"><circle cx="7.800" cy="4.200" r="3.700" fill="#d2d2d2"/><path d="M5.200 6.800L0.800 11.200" stroke="#d2d2d2" stroke-width="1.600" stroke-linecap="round"/></svg>
<svg style="left:10.4px;top:212.7px" width="8.3" height="9.2" viewBox="0 0 9 10"><path d="M1 9.500V0.800l7 7.400" fill="none" stroke="#d2d2d2" stroke-width="1.200"/></svg>
<span class="t t" style="left:33.1px;top:211.1px;color:#e6e6e6;font-family:'Liberation Serif',serif;font-weight:bold;font-size:14px;line-height:12px">T</span>
<svg style="left:10.8px;top:229.5px" width="7.4" height="11.0" viewBox="0 0 8 12"><path d="M0.500 0.500v10l2.500-2.300 1.700 3.500 1.500-.7-1.700-3.400h3.200z" fill="#e8e8e8"/></svg>
<svg style="left:32.0px;top:230.4px" width="11.0" height="9.2" viewBox="0 0 12 10"><rect x="0.600" y="0.600" width="10.800" height="8.800" fill="#7a7a7a" stroke="#d2d2d2" stroke-width="1.200"/></svg>
<svg style="left:9.4px;top:247.2px" width="10.1" height="11.0" viewBox="0 0 11 12"><path d="M2.600 6V2.200c0-1 1.400-1 1.400 0V1.200c0-1 1.500-1 1.500 0v.6c0-1 1.500-1 1.500 0v1c0-.9 1.400-.9 1.400 0v5.400c0 2-1.300 3.600-3.400 3.600-1.600 0-2.400-.6-3.200-1.900L0.400 7.400c-.5-.9.600-1.600 1.200-.8z" fill="#e6e6e6"/></svg>
<svg style="left:32.0px;top:247.2px" width="11.0" height="11.0" viewBox="0 0 12 12"><circle cx="4.800" cy="4.800" r="3.800" fill="none" stroke="#d2d2d2" stroke-width="1.300"/><path d="M7.600 7.600l3.800 3.800" stroke="#d2d2d2" stroke-width="1.600"/></svg>
<div style="left:9.5px;top:269.5px;width:2.2px;height:2.2px;background:#e4e4e4;border-radius:1.100px"></div>
<div style="left:13.5px;top:269.5px;width:2.2px;height:2.2px;background:#e4e4e4;border-radius:1.100px"></div>
<div style="left:17.5px;top:269.5px;width:2.2px;height:2.2px;background:#e4e4e4;border-radius:1.100px"></div>
<svg style="left:20.8px;top:79.1px" width="2.500" height="2.500" viewBox="0 0 3 3"><path d="M3 0v3H0z" fill="#bdbdbd"/></svg>
<svg style="left:43.8px;top:79.1px" width="2.500" height="2.500" viewBox="0 0 3 3"><path d="M3 0v3H0z" fill="#bdbdbd"/></svg>
<svg style="left:20.8px;top:96.8px" width="2.500" height="2.500" viewBox="0 0 3 3"><path d="M3 0v3H0z" fill="#bdbdbd"/></svg>
<svg style="left:43.8px;top:96.8px" width="2.500" height="2.500" viewBox="0 0 3 3"><path d="M3 0v3H0z" fill="#bdbdbd"/></svg>
<svg style="left:20.8px;top:114.5px" width="2.500" height="2.500" viewBox="0 0 3 3"><path d="M3 0v3H0z" fill="#bdbdbd"/></svg>
<svg style="left:20.8px;top:132.1px" width="2.500" height="2.500" viewBox="0 0 3 3"><path d="M3 0v3H0z" fill="#bdbdbd"/></svg>
<svg style="left:43.8px;top:132.1px" width="2.500" height="2.500" viewBox="0 0 3 3"><path d="M3 0v3H0z" fill="#bdbdbd"/></svg>
<svg style="left:20.8px;top:150.1px" width="2.500" height="2.500" viewBox="0 0 3 3"><path d="M3 0v3H0z" fill="#bdbdbd"/></svg>
<svg style="left:43.8px;top:150.1px" width="2.500" height="2.500" viewBox="0 0 3 3"><path d="M3 0v3H0z" fill="#bdbdbd"/></svg>
<svg style="left:20.8px;top:167.8px" width="2.500" height="2.500" viewBox="0 0 3 3"><path d="M3 0v3H0z" fill="#bdbdbd"/></svg>
<svg style="left:43.8px;top:167.8px" width="2.500" height="2.500" viewBox="0 0 3 3"><path d="M3 0v3H0z" fill="#bdbdbd"/></svg>
<svg style="left:20.8px;top:185.5px" width="2.500" height="2.500" viewBox="0 0 3 3"><path d="M3 0v3H0z" fill="#bdbdbd"/></svg>
<svg style="left:43.8px;top:185.5px" width="2.500" height="2.500" viewBox="0 0 3 3"><path d="M3 0v3H0z" fill="#bdbdbd"/></svg>
<svg style="left:20.8px;top:203.1px" width="2.500" height="2.500" viewBox="0 0 3 3"><path d="M3 0v3H0z" fill="#bdbdbd"/></svg>
<svg style="left:43.8px;top:203.1px" width="2.500" height="2.500" viewBox="0 0 3 3"><path d="M3 0v3H0z" fill="#bdbdbd"/></svg>
<svg style="left:20.8px;top:221.1px" width="2.500" height="2.500" viewBox="0 0 3 3"><path d="M3 0v3H0z" fill="#bdbdbd"/></svg>
<svg style="left:43.8px;top:221.1px" width="2.500" height="2.500" viewBox="0 0 3 3"><path d="M3 0v3H0z" fill="#bdbdbd"/></svg>
<svg style="left:20.8px;top:238.8px" width="2.500" height="2.500" viewBox="0 0 3 3"><path d="M3 0v3H0z" fill="#bdbdbd"/></svg>
<svg style="left:43.8px;top:238.8px" width="2.500" height="2.500" viewBox="0 0 3 3"><path d="M3 0v3H0z" fill="#bdbdbd"/></svg>
<svg style="left:20.8px;top:256.5px" width="2.500" height="2.500" viewBox="0 0 3 3"><path d="M3 0v3H0z" fill="#bdbdbd"/></svg>
<svg style="left:43.8px;top:256.5px" width="2.500" height="2.500" viewBox="0 0 3 3"><path d="M3 0v3H0z" fill="#bdbdbd"/></svg>
<svg style="left:21.5px;top:274.5px" width="2.500" height="2.500" viewBox="0 0 3 3"><path d="M3 0v3H0z" fill="#bdbdbd"/></svg>
<div style="left:24.0px;top:294.5px;width:17.7px;height:17.0px;background:#fff;border:1px solid #3c3c3c"></div>
<div style="left:14.0px;top:284.0px;width:16.7px;height:16.0px;background:#f0cdcd;border:1px solid #3c3c3c;box-shadow:0 0 0 0.500px #e8e8e8 inset"></div>
<svg style="left:35.500px;top:283.500px" width="9" height="9" viewBox="0 0 9 9"><path d="M2.500 1.500h2.500a2 2 0 0 1 2 2v2.500" fill="none" stroke="#e0e0e0" stroke-width="1.200"/><path d="M0.500 1.500L3 0v3zM7 8.500L5.500 6h3z" fill="#e0e0e0"/></svg>
<div style="left:14.5px;top:307.5px;width:5.0px;height:5.0px;background:#eee;border:1px solid #ddd"></div>
<div style="left:12.5px;top:305.5px;width:5.0px;height:5.0px;background:#111;border:1px solid #ccc"></div>
<svg style="left:8.5px;top:321.4px" width="11.0" height="8.3" viewBox="0 0 12 9"><rect x="0.500" y="0.500" width="11" height="8" fill="none" stroke="#cfcfcf" stroke-width="1"/><circle cx="6" cy="4.500" r="2.500" fill="none" stroke="#a8a8a8" stroke-width="1" stroke-dasharray="1.200 0.800"/></svg>
<svg style="left:31.0px;top:320.9px" width="12.0" height="9.2" viewBox="0 0 13 10"><rect x="3.500" y="0.500" width="9" height="6" fill="#535353" stroke="#cfcfcf" stroke-width="1"/><rect x="0.500" y="3.500" width="9" height="6" fill="#535353" stroke="#cfcfcf" stroke-width="1"/></svg>
<svg style="left:44.0px;top:329.5px" width="2.500" height="2.500" viewBox="0 0 3 3"><path d="M3 0v3H0z" fill="#bdbdbd"/></svg>
<svg style="left:9.0px;top:340.0px" width="11.0" height="11.0" viewBox="0 0 12 12"><path d="M3.500 1.500A4 4 0 0 0 2 7" fill="none" stroke="#d8d8d8" stroke-width="1.100" stroke-dasharray="1.500 1"/><rect x="4.500" y="5.500" width="7" height="6" fill="none" stroke="#d8d8d8" stroke-width="1"/><path d="M5 11l2-2.500 1.500 1.500 1-1 1.500 2z" fill="#d8d8d8"/><path d="M9.500 0l.6 1.500 1.500.6-1.500.6-.6 1.500-.6-1.500-1.500-.6 1.500-.6z" fill="#e8e8e8"/></svg>
<div style="left:89px;top:19px;width:158.700px;height:297.800px;background:#f0f0f0;border:1px solid #c8c8c8;box-shadow:0.500px 0.500px 1px rgba(0,0,0,0.25)"></div>
<span class="t mi" style="left:104.0px;top:21.8px;">모드(M)</span>
<svg style="left:238.8px;top:23.2px" width="4" height="7" viewBox="0 0 4 7"><path d="M0 0l4 3.500L0 7z" fill="#111"/></svg>
<div style="left:91.0px;top:36.3px;width:154.5px;height:1.0px;background:#c6c6c6;"></div>
<div style="left:90.3px;top:39.0px;width:155.7px;height:14.5px;background:#0a74da;"></div>
<span class="t mi" style="left:104.0px;top:41.3px;color:#fff;">조정(J)</span>
<svg style="left:238.8px;top:42.7px" width="4" height="7" viewBox="0 0 4 7"><path d="M0 0l4 3.500L0 7z" fill="#fff"/></svg>
<div style="left:91.0px;top:56.6px;width:154.5px;height:1.0px;background:#c6c6c6;"></div>
<span class="t mi" style="left:104.0px;top:60.5px;">자동 톤(N)</span>
<span class="t sc" style="left:149.0px;width:84.5px;top:60.5px;">Shift+Ctrl+L</span>
<span class="t mi" style="left:104.0px;top:75.0px;">자동 대비(U)</span>
<span class="t sc" style="left:149.0px;width:84.5px;top:75.0px;">Alt+Shift+Ctrl+L</span>
<span class="t mi" style="left:104.0px;top:89.6px;">자동 색상(O)</span>
<span class="t sc" style="left:149.0px;width:84.5px;top:89.6px;">Shift+Ctrl+B</span>
<div style="left:91.0px;top:104.5px;width:154.5px;height:1.0px;background:#c6c6c6;"></div>
<span class="t mi" style="left:104.0px;top:109.3px;">이미지 크기(I)...</span>
<span class="t sc" style="left:149.0px;width:84.5px;top:109.3px;">Alt+Ctrl+I</span>
<span class="t mi" style="left:104.0px;top:123.8px;">캔버스 크기(S)...</span>
<span class="t sc" style="left:149.0px;width:84.5px;top:123.8px;">Alt+Ctrl+C</span>
<span class="t mi" style="left:104.0px;top:138.3px;">이미지 회전(G)</span>
<svg style="left:238.8px;top:139.7px" width="4" height="7" viewBox="0 0 4 7"><path d="M0 0l4 3.500L0 7z" fill="#111"/></svg>
<span class="t mi d" style="left:104.0px;top:152.8px;">자르기(P)</span>
<span class="t mi" style="left:104.0px;top:167.4px;">재단(R)...</span>
<span class="t mi" style="left:104.0px;top:182.2px;">모두 나타내기(V)</span>
<div style="left:91.0px;top:197.6px;width:154.5px;height:1.0px;background:#c6c6c6;"></div>
<span class="t mi" style="left:104.0px;top:202.0px;">복제(D)...</span>
<span class="t mi d" style="left:104.0px;top:216.5px;">이미지 적용(Y)...</span>
<span class="t mi" style="left:104.0px;top:231.0px;">연산(C)...</span>
<div style="left:91.0px;top:245.8px;width:154.5px;height:1.0px;background:#c6c6c6;"></div>
<span class="t mi" style="left:104.0px;top:249.7px;">변수(B)</span>
<svg style="left:238.8px;top:251.1px" width="4" height="7" viewBox="0 0 4 7"><path d="M0 0l4 3.500L0 7z" fill="#111"/></svg>
<span class="t mi d" style="left:104.0px;top:264.3px;">데이터 세트 적용(L)...</span>
<div style="left:91.0px;top:279.7px;width:154.5px;height:1.0px;background:#c6c6c6;"></div>
<span class="t mi d" style="left:104.0px;top:284.0px;">트랩(T)...</span>
<div style="left:91.0px;top:299.3px;width:154.5px;height:1.0px;background:#c6c6c6;"></div>
<span class="t mi" style="left:104.0px;top:302.7px;">분석(A)</span>
<svg style="left:238.8px;top:304.1px" width="4" height="7" viewBox="0 0 4 7"><path d="M0 0l4 3.500L0 7z" fill="#111"/></svg>
<div style="left:246px;top:37.300px;width:155.500px;height:362.400px;background:#f0f0f0;border:1px solid #c8c8c8;box-shadow:0.500px 0.500px 1px rgba(0,0,0,0.25)"></div>
<span class="t si" style="left:262.3px;top:40.5px;">명도/대비(C)...</span>
<div style="left:248.0px;top:52.5px;width:152.0px;height:17.5px;background:#0a74da;"></div>
<span class="t si" style="left:262.3px;top:56.0px;color:#fff;">레벨(L)...</span>
<span class="t ss" style="left:299.0px;width:87.5px;top:56.0px;color:#fff;">Ctrl+L</span>
<span class="t si" style="left:262.3px;top:72.0px;">곡선(U)...</span>
<span class="t ss" style="left:299.0px;width:87.5px;top:72.0px;">Ctrl+M</span>
<span class="t si" style="left:262.3px;top:87.2px;">노출(E)...</span>
<div style="left:249.0px;top:103.3px;width:151.5px;height:1.0px;background:#c6c6c6;"></div>
<span class="t si" style="left:262.3px;top:108.0px;">생동감(V)...</span>
<span class="t si" style="left:262.3px;top:123.0px;">색조/채도(H)...</span>
<span class="t ss" style="left:299.0px;width:87.5px;top:123.0px;">Ctrl+U</span>
<span class="t si" style="left:262.3px;top:138.3px;">색상 균형(B)...</span>
<span class="t ss" style="left:299.0px;width:87.5px;top:138.3px;">Ctrl+B</span>
<span class="t si" style="left:262.3px;top:154.0px;">흑백(K)...</span>
<span class="t ss" style="left:299.0px;width:87.5px;top:154.0px;">Alt+Shift+Ctrl+B</span>
<span class="t si" style="left:262.3px;top:169.5px;">포토 필터(F)...</span>
<span class="t si" style="left:262.3px;top:185.0px;">채널 혼합(X)...</span>
<span class="t si" style="left:262.3px;top:200.5px;">색상 검색...</span>
<div style="left:249.0px;top:216.0px;width:151.5px;height:1.0px;background:#c6c6c6;"></div>
<span class="t si" style="left:262.3px;top:221.0px;">반전(I)</span>
<span class="t ss" style="left:299.0px;width:87.5px;top:221.0px;">Ctrl+I</span>
<span class="t si" style="left:262.3px;top:236.3px;">포스터화(P)...</span>
<span class="t si" style="left:262.3px;top:251.8px;">한계값(T)...</span>
<span class="t si" style="left:262.3px;top:267.2px;">그레이디언트 맵(G)...</span>
<span class="t si" style="left:262.3px;top:282.6px;">선택 색상(S)...</span>
<div style="left:249.0px;top:298.3px;width:151.5px;height:1.0px;background:#c6c6c6;"></div>
<span class="t si" style="left:262.3px;top:303.3px;">어두운 영역/밝은 영역(W)...</span>
<span class="t si" style="left:262.3px;top:318.3px;">HDR 토닝...</span>
<div style="left:249.0px;top:334.5px;width:151.5px;height:1.0px;background:#c6c6c6;"></div>
<span class="t si d" style="left:262.3px;top:339.5px;">채도 감소(D)</span>
<span class="t ss d" style="left:299.0px;width:87.5px;top:339.5px;">Shift+Ctrl+U</span>
<span class="t si d" style="left:262.3px;top:354.9px;">색상 일치(M)...</span>
<span class="t si d" style="left:262.3px;top:370.2px;">색상 대체(R)...</span>
<span class="t si d" style="left:262.3px;top:385.6px;">균일화(Q)</span>
<div style="left:246.0px;top:48.2px;width:156.7px;height:26.1px;border:4.500px solid #ffff00;border-left-width:0"></div>
<div style="left:221.5px;top:48.2px;width:26.5px;height:26.1px;background:#ffff00;"></div>
<span class="t t" style="left:221.5px;width:26.5px;top:55.6px;color:#000;font-weight:bold;font-size:13.300px;line-height:14px;height:14px;text-align:center;top:54.300px">2</span>
<div style="left:529.0px;top:134.0px;width:208.7px;height:61.7px;border:4.300px solid #ffff00"></div>
<div style="left:506.0px;top:134.0px;width:27.2px;height:27.5px;background:#ffff00;"></div>
<span class="t t" style="left:506.0px;width:27.2px;top:141.8px;color:#000;font-weight:bold;font-size:13.300px;line-height:14px;height:14px;text-align:center;top:140.700px">1</span>
</div>
</body></html>
